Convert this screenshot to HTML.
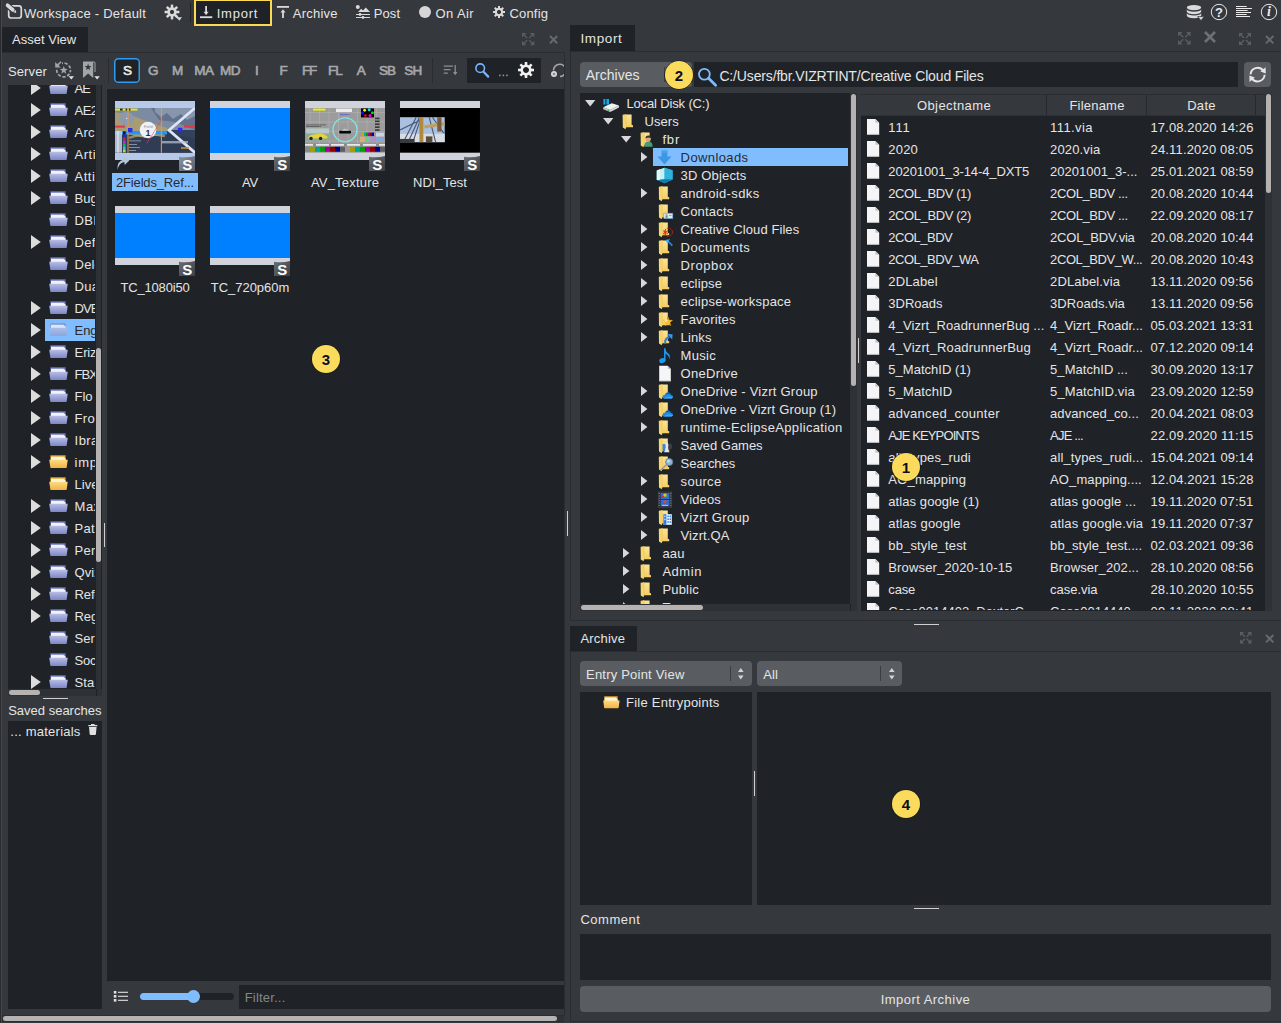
<!DOCTYPE html>
<html><head><meta charset="utf-8"><title>Workspace - Default</title><style>
html,body{margin:0;padding:0;}
body{width:1281px;height:1023px;overflow:hidden;background:#35383d;color:#e4e5e6;font-family:"Liberation Sans",sans-serif;font-size:13px;position:relative;}
.a{position:absolute;}
.t{position:absolute;white-space:nowrap;line-height:16px;height:16px;}
.c{overflow:hidden;}
.bub{position:absolute;width:28px;height:28px;border-radius:14px;background:#fbdb5c;color:#0a0e20;font-weight:bold;font-size:15px;line-height:30px;text-align:center;box-shadow:0 0 0 0.6px #14161c;}
svg{position:absolute;overflow:visible;}
</style></head>
<body>
<svg style="left:0px;top:0px;" width="30" height="26" viewBox="0 0 30 26"><rect x="8.7" y="5.9" width="12.6" height="12.1" rx="2.6" fill="none" stroke="#dadada" stroke-width="1.7"/><path d="M7.2 5.2 L14.2 11.2" stroke="#35383d" stroke-width="6" stroke-linecap="butt"/><path d="M7.6 5.3 L12.8 9.9" stroke="#dadada" stroke-width="3.7" stroke-linecap="round"/><path d="M13.4 12.3 L15.9 10 L16.2 12.9Z" fill="#dadada"/></svg>
<div class="t" style="top:5.7035px;letter-spacing:0.24px;left:24px;">Workspace - Default</div>
<svg style="left:0px;top:0px;" width="200" height="26" viewBox="0 0 200 26"><g transform="translate(172,12) rotate(0)"><rect x="-1.25" y="-7.4" width="2.5" height="5.2" fill="#dadada" transform="rotate(0)"/><rect x="-1.25" y="-7.4" width="2.5" height="5.2" fill="#dadada" transform="rotate(45)"/><rect x="-1.25" y="-7.4" width="2.5" height="5.2" fill="#dadada" transform="rotate(90)"/><rect x="-1.25" y="-7.4" width="2.5" height="5.2" fill="#dadada" transform="rotate(135)"/><rect x="-1.25" y="-7.4" width="2.5" height="5.2" fill="#dadada" transform="rotate(180)"/><rect x="-1.25" y="-7.4" width="2.5" height="5.2" fill="#dadada" transform="rotate(225)"/><rect x="-1.25" y="-7.4" width="2.5" height="5.2" fill="#dadada" transform="rotate(270)"/><rect x="-1.25" y="-7.4" width="2.5" height="5.2" fill="#dadada" transform="rotate(315)"/><circle r="3.45" fill="none" stroke="#dadada" stroke-width="2.5"/></g><path d="M176.6 17.2 L182 17.2 L179.3 20.8Z" fill="#dadada"/><path d="M174.5 14.5 L178 18" stroke="#dadada" stroke-width="2"/></svg>
<div class="a" style="left:190px;top:3px;width:1px;height:19px;background:#1f2226;"></div>
<div class="a" style="left:194px;top:-1px;width:74px;height:23px;background:#1f2226;border:2px solid #fbdb55;"></div>
<svg style="left:0px;top:0px;" width="230" height="26" viewBox="0 0 230 26"><path d="M200 17.2 H212.3" stroke="#dadada" stroke-width="1.8"/><path d="M206.1 6 V13" stroke="#dadada" stroke-width="1.8"/><path d="M203.6 11.8 H208.6 L206.1 15.2Z" fill="#dadada"/></svg>
<div class="t" style="top:5.7035px;letter-spacing:0.76px;left:216.7px;">Import</div>
<svg style="left:0px;top:0px;" width="300" height="26" viewBox="0 0 300 26"><path d="M276.9 6.9 H289" stroke="#dadada" stroke-width="1.8"/><path d="M283 11.5 V18" stroke="#dadada" stroke-width="1.8"/><path d="M280.5 12.6 H285.5 L283 9.3Z" fill="#dadada"/></svg>
<div class="t" style="top:5.7035px;letter-spacing:0.22px;left:292.8px;">Archive</div>
<svg style="left:0px;top:0px;" width="400" height="26" viewBox="0 0 400 26"><circle cx="357.8" cy="6.9" r="2" fill="#dadada"/><path d="M358 12 L361.2 8.8 L363 10.6 L365.8 7.6 L370 12Z" fill="#dadada"/><path d="M356 14.5 H370 M356 17.5 H370" stroke="#dadada" stroke-width="1"/><circle cx="360" cy="14.5" r="1.4" fill="#dadada"/><circle cx="363" cy="17.5" r="1.4" fill="#dadada"/></svg>
<div class="t" style="top:5.7035px;letter-spacing:0.11px;left:373.7px;">Post</div>
<div class="a" style="left:418.8px;top:6px;width:12.3px;height:12.3px;background:#d6d6d6;border-radius:7px;"></div>
<div class="t" style="top:5.7035px;letter-spacing:0.36px;left:435.6px;">On Air</div>
<svg style="left:0px;top:0px;" width="520" height="26" viewBox="0 0 520 26"><g transform="translate(499,12) rotate(0)"><rect x="-1" y="-6" width="2" height="3.8" fill="#dadada" transform="rotate(0)"/><rect x="-1" y="-6" width="2" height="3.8" fill="#dadada" transform="rotate(45)"/><rect x="-1" y="-6" width="2" height="3.8" fill="#dadada" transform="rotate(90)"/><rect x="-1" y="-6" width="2" height="3.8" fill="#dadada" transform="rotate(135)"/><rect x="-1" y="-6" width="2" height="3.8" fill="#dadada" transform="rotate(180)"/><rect x="-1" y="-6" width="2" height="3.8" fill="#dadada" transform="rotate(225)"/><rect x="-1" y="-6" width="2" height="3.8" fill="#dadada" transform="rotate(270)"/><rect x="-1" y="-6" width="2" height="3.8" fill="#dadada" transform="rotate(315)"/><circle r="3.2" fill="none" stroke="#dadada" stroke-width="2"/></g></svg>
<div class="t" style="top:5.7035px;letter-spacing:0.21px;left:509.4px;">Config</div>
<svg style="left:1180px;top:0px;" width="100" height="26" viewBox="0 0 100 26"><ellipse cx="14" cy="7.6" rx="7.2" ry="2.6" fill="#dadada"/><path d="M6.8 9.2 A7.2 2.6 0 0 0 21.2 9.2 V11.6 A7.2 2.6 0 0 1 6.8 11.6Z" fill="#dadada"/><path d="M6.8 13 A7.2 2.6 0 0 0 21.2 13 V15.6 A7.2 2.6 0 0 1 6.8 15.6Z" fill="#dadada"/><path d="M6.8 9.8 V8 M21.2 9.8 V8" stroke="#dadada" stroke-width="0"/><path d="M17.6 16.6 L24.4 16.6 L21 20.6Z" fill="#dadada" stroke="#35383d" stroke-width="0.8"/><circle cx="39" cy="12" r="7.7" fill="none" stroke="#e8e8e8" stroke-width="1"/><path d="M56 6.5 H66.7" stroke="#ececec" stroke-width="1"/><path d="M56 8.5 H71.9" stroke="#ececec" stroke-width="1"/><path d="M56 10.5 H67.6" stroke="#ececec" stroke-width="1"/><path d="M56 12.5 H71" stroke="#ececec" stroke-width="1"/><path d="M56 14.5 H66.7" stroke="#ececec" stroke-width="1"/><path d="M56 16.5 H70" stroke="#ececec" stroke-width="1"/><circle cx="89" cy="12" r="7.7" fill="none" stroke="#e8e8e8" stroke-width="1"/></svg>
<div class="t" style="top:4.7035px;letter-spacing:0px;font-weight:bold;left:1069px;width:300px;text-align:center;color:#ececec;">?</div>
<div class="t" style="left:1264px;top:3.5px;width:10px;text-align:center;font-family:'Liberation Serif',serif;font-style:italic;font-weight:bold;font-size:14px;color:#ececec;">i</div>
<svg style="left:1177.5px;top:31.5px;" width="12.6" height="12.6" viewBox="0 0 12.6 12.6"><path d="M0 0 L4.536 0 L0 4.536 Z" fill="#5b5e63"/><path d="M0.8 0.8 L5.292 5.292" stroke="#5b5e63" stroke-width="1.3"/><path d="M12.6 0 L8.064 0 L12.6 4.536 Z" fill="#5b5e63"/><path d="M11.8 0.8 L7.308 5.292" stroke="#5b5e63" stroke-width="1.3"/><path d="M0 12.6 L4.536 12.6 L0 8.064 Z" fill="#5b5e63"/><path d="M0.8 11.8 L5.292 7.308" stroke="#5b5e63" stroke-width="1.3"/><path d="M12.6 12.6 L8.064 12.6 L12.6 8.064 Z" fill="#5b5e63"/><path d="M11.8 11.8 L7.308 7.308" stroke="#5b5e63" stroke-width="1.3"/></svg>
<svg style="left:1205px;top:32.4px;" width="10" height="10" viewBox="0 0 10 10"><path d="M0 0 L10 10 M10 0 L0 10" stroke="#6d7074" stroke-width="2.6" fill="none"/></svg>
<svg style="left:1239px;top:33px;" width="12" height="12" viewBox="0 0 12 12"><path d="M0 0 L4.32 0 L0 4.32 Z" fill="#5b5e63"/><path d="M0.8 0.8 L5.04 5.04" stroke="#5b5e63" stroke-width="1.3"/><path d="M12 0 L7.68 0 L12 4.32 Z" fill="#5b5e63"/><path d="M11.2 0.8 L6.96 5.04" stroke="#5b5e63" stroke-width="1.3"/><path d="M0 12 L4.32 12 L0 7.68 Z" fill="#5b5e63"/><path d="M0.8 11.2 L5.04 6.96" stroke="#5b5e63" stroke-width="1.3"/><path d="M12 12 L7.68 12 L12 7.68 Z" fill="#5b5e63"/><path d="M11.2 11.2 L6.96 6.96" stroke="#5b5e63" stroke-width="1.3"/></svg>
<svg style="left:1266.3px;top:35.7px;" width="7.4" height="7.4" viewBox="0 0 7.4 7.4"><path d="M0 0 L7.4 7.4 M7.4 0 L0 7.4" stroke="#66696d" stroke-width="2" fill="none"/></svg>
<svg style="left:522px;top:33px;" width="12.3" height="12.3" viewBox="0 0 12.3 12.3"><path d="M0 0 L4.428 0 L0 4.428 Z" fill="#5b5e63"/><path d="M0.8 0.8 L5.166 5.166" stroke="#5b5e63" stroke-width="1.3"/><path d="M12.3 0 L7.872 0 L12.3 4.428 Z" fill="#5b5e63"/><path d="M11.5 0.8 L7.134 5.166" stroke="#5b5e63" stroke-width="1.3"/><path d="M0 12.3 L4.428 12.3 L0 7.872 Z" fill="#5b5e63"/><path d="M0.8 11.5 L5.166 7.134" stroke="#5b5e63" stroke-width="1.3"/><path d="M12.3 12.3 L7.872 12.3 L12.3 7.872 Z" fill="#5b5e63"/><path d="M11.5 11.5 L7.134 7.134" stroke="#5b5e63" stroke-width="1.3"/></svg>
<svg style="left:549.6px;top:35.8px;" width="7.2" height="7.2" viewBox="0 0 7.2 7.2"><path d="M0 0 L7.2 7.2 M7.2 0 L0 7.2" stroke="#66696d" stroke-width="2" fill="none"/></svg>
<svg style="left:1239.5px;top:632px;" width="11.5" height="11.5" viewBox="0 0 11.5 11.5"><path d="M0 0 L4.14 0 L0 4.14 Z" fill="#5b5e63"/><path d="M0.8 0.8 L4.83 4.83" stroke="#5b5e63" stroke-width="1.3"/><path d="M11.5 0 L7.36 0 L11.5 4.14 Z" fill="#5b5e63"/><path d="M10.7 0.8 L6.67 4.83" stroke="#5b5e63" stroke-width="1.3"/><path d="M0 11.5 L4.14 11.5 L0 7.36 Z" fill="#5b5e63"/><path d="M0.8 10.7 L4.83 6.67" stroke="#5b5e63" stroke-width="1.3"/><path d="M11.5 11.5 L7.36 11.5 L11.5 7.36 Z" fill="#5b5e63"/><path d="M10.7 10.7 L6.67 6.67" stroke="#5b5e63" stroke-width="1.3"/></svg>
<svg style="left:1266.3px;top:634.5px;" width="7.4" height="7.4" viewBox="0 0 7.4 7.4"><path d="M0 0 L7.4 7.4 M7.4 0 L0 7.4" stroke="#66696d" stroke-width="2" fill="none"/></svg>
<div class="a" style="left:0px;top:0px;width:1px;height:1023px;background:#292b2f;"></div>
<div class="a" style="left:1px;top:0px;width:1px;height:1023px;background:#45484d;"></div>
<div class="a" style="left:2px;top:27px;width:86px;height:25px;background:#1f2226;"></div>
<div class="t" style="top:31.7035px;letter-spacing:0.02px;left:12px;">Asset View</div>
<div class="a" style="left:2px;top:52px;width:563px;height:1px;background:#2a2d31;"></div>
<div class="a" style="left:564px;top:52px;width:1px;height:964px;background:#2a2d31;"></div>
<div class="a" style="left:2px;top:1015px;width:563px;height:1px;background:#2a2d31;"></div>
<div class="t" style="top:63.7035px;letter-spacing:0.11px;left:8px;">Server</div>
<svg style="left:50px;top:58px;" width="60" height="26" viewBox="0 0 60 26"><circle cx="13.6" cy="12" r="6.9" fill="none" stroke="#a3a6a9" stroke-width="1.7" stroke-dasharray="3.2 1.7" stroke-dashoffset="1"/><rect x="3" y="2" width="9" height="8" fill="#35383d"/><polygon points="13.8,8.1 14.858,10.8438 17.7944,11.0021 15.5119,12.8562 16.2687,15.6979 13.8,14.1 11.3313,15.6979 12.0881,12.8562 9.80556,11.0021 12.742,10.8438" fill="#a3a6a9"/><path d="M5.2 4 L5.2 9.6 L10.8 9.6Z" fill="#a3a6a9"/><path d="M7.2 7.6 L11 3.8" stroke="#a3a6a9" stroke-width="1.6"/><path d="M18.6 18.2 L24 18.2 L21.3 21.6Z" fill="#e2e2e2"/><path d="M33.2 4 H44 Q45 4 45 5 V14" fill="none" stroke="#a3a6a9" stroke-width="1"/><path d="M33 4 H43.2 V20 L38.1 15.6 L33 20Z" fill="#a3a6a9"/><polygon points="38.1,5.6 38.9817,7.98647 41.5238,8.08754 39.5266,9.66353 40.216,12.1125 38.1,10.7 35.984,12.1125 36.6734,9.66353 34.6762,8.08754 37.2183,7.98647" fill="#35383d"/><path d="M44.4 18.2 L49.8 18.2 L47.1 21.6Z" fill="#e2e2e2"/></svg>
<div class="a" style="left:108px;top:58px;width:1px;height:25px;background:#2a2c30;"></div>
<svg style="left:114px;top:58px;" width="26" height="25" viewBox="0 0 26 25"><rect x="0.75" y="0.75" width="24.5" height="23.5" rx="3.6" fill="#1f2226" stroke="#2f9bf2" stroke-width="1.5"/></svg>
<div class="t" style="top:63.0382px;letter-spacing:-1.20px;font-size:13.5px;left:-23px;width:300px;text-align:center;color:#e8e8e8;-webkit-text-stroke:0.65px #e8e8e8;">S</div>
<div class="t" style="top:63.0382px;letter-spacing:-0.69px;font-size:13.5px;left:3px;width:300px;text-align:center;color:#a5a7aa;-webkit-text-stroke:0.65px #a5a7aa;">G</div>
<div class="t" style="top:63.0382px;letter-spacing:0.94px;font-size:13.5px;left:28px;width:300px;text-align:center;color:#a5a7aa;-webkit-text-stroke:0.65px #a5a7aa;">M</div>
<div class="t" style="top:63.0382px;letter-spacing:-0.38px;font-size:13.5px;left:54px;width:300px;text-align:center;color:#a5a7aa;-webkit-text-stroke:0.65px #a5a7aa;">MA</div>
<div class="t" style="top:63.0382px;letter-spacing:-0.50px;font-size:13.5px;left:80px;width:300px;text-align:center;color:#a5a7aa;-webkit-text-stroke:0.65px #a5a7aa;">MD</div>
<div class="t" style="top:63.0382px;letter-spacing:-0.00px;font-size:13.5px;left:107px;width:300px;text-align:center;color:#a5a7aa;-webkit-text-stroke:0.65px #a5a7aa;">I</div>
<div class="t" style="top:63.0382px;letter-spacing:-1.20px;font-size:13.5px;left:133px;width:300px;text-align:center;color:#a5a7aa;-webkit-text-stroke:0.65px #a5a7aa;">F</div>
<div class="t" style="top:63.0382px;letter-spacing:-1.20px;font-size:13.5px;left:159px;width:300px;text-align:center;color:#a5a7aa;-webkit-text-stroke:0.65px #a5a7aa;">FF</div>
<div class="t" style="top:63.0382px;letter-spacing:-0.90px;font-size:13.5px;left:185px;width:300px;text-align:center;color:#a5a7aa;-webkit-text-stroke:0.65px #a5a7aa;">FL</div>
<div class="t" style="top:63.0382px;letter-spacing:-0.47px;font-size:13.5px;left:211px;width:300px;text-align:center;color:#a5a7aa;-webkit-text-stroke:0.65px #a5a7aa;">A</div>
<div class="t" style="top:63.0382px;letter-spacing:-0.93px;font-size:13.5px;left:237px;width:300px;text-align:center;color:#a5a7aa;-webkit-text-stroke:0.65px #a5a7aa;">SB</div>
<div class="t" style="top:63.0382px;letter-spacing:-0.70px;font-size:13.5px;left:263px;width:300px;text-align:center;color:#a5a7aa;-webkit-text-stroke:0.65px #a5a7aa;">SH</div>
<div class="a" style="left:431.5px;top:58px;width:1px;height:25px;background:#2a2c30;"></div>
<svg style="left:440px;top:60px;" width="20" height="20" viewBox="0 0 20 20"><path d="M3.8 6.2 H13 M3.8 9.7 H10.6 M3.8 13.2 H7.8" stroke="#8d9093" stroke-width="1.3"/><path d="M15.2 5 V14" stroke="#8d9093" stroke-width="1.3"/><path d="M13 12 H17.4 L15.2 15.2Z" fill="#8d9093"/></svg>
<div class="a" style="left:467px;top:58px;width:74px;height:24.5px;background:#1f2226;"></div>
<svg style="left:467px;top:58px;" width="74" height="25" viewBox="0 0 74 25"><circle cx="13.2" cy="10.2" r="4.3" fill="none" stroke="#74b4ff" stroke-width="1.6"/><path d="M16.5103 13.6759 L21.2 18.6" stroke="#74b4ff" stroke-width="2.3" stroke-linecap="round"/><rect x="32" y="16.6" width="1.6" height="1.6" fill="#8594a6"/><rect x="35.6" y="16.6" width="1.6" height="1.6" fill="#8594a6"/><rect x="39.2" y="16.6" width="1.6" height="1.6" fill="#8594a6"/><g transform="translate(59,12) rotate(0)"><rect x="-1.3" y="-8" width="2.6" height="5" fill="#f0f0f0" transform="rotate(0)"/><rect x="-1.3" y="-8" width="2.6" height="5" fill="#f0f0f0" transform="rotate(45)"/><rect x="-1.3" y="-8" width="2.6" height="5" fill="#f0f0f0" transform="rotate(90)"/><rect x="-1.3" y="-8" width="2.6" height="5" fill="#f0f0f0" transform="rotate(135)"/><rect x="-1.3" y="-8" width="2.6" height="5" fill="#f0f0f0" transform="rotate(180)"/><rect x="-1.3" y="-8" width="2.6" height="5" fill="#f0f0f0" transform="rotate(225)"/><rect x="-1.3" y="-8" width="2.6" height="5" fill="#f0f0f0" transform="rotate(270)"/><rect x="-1.3" y="-8" width="2.6" height="5" fill="#f0f0f0" transform="rotate(315)"/><circle r="4.3" fill="none" stroke="#f0f0f0" stroke-width="2.6"/></g></svg>
<div class="a c" style="left:548px;top:58px;width:16px;height:26px;">
<svg style="left:0px;top:0px;" width="30" height="26" viewBox="0 0 30 26"><path d="M5.5 12.5 A6.2 6.2 0 1 1 12 18.6" fill="none" stroke="#a3a6a9" stroke-width="1.5"/><circle cx="6" cy="16" r="3" fill="#d8d8d8"/><circle cx="6" cy="16" r="1.3" fill="#8a8d90"/></svg>
</div>
<div class="a" style="left:8px;top:85px;width:94px;height:611px;background:#1f2226;"></div>
<div class="a c" style="left:8px;top:85px;width:87.2px;height:604px;">
<svg width="0" height="0" style="left:0;top:0"><defs><linearGradient id="fb" x1="0" y1="0" x2="0" y2="1"><stop offset="0" stop-color="#b9bfe4"/><stop offset="1" stop-color="#7c86c6"/></linearGradient><linearGradient id="fy" x1="0" y1="0" x2="0" y2="1"><stop offset="0" stop-color="#fcdc84"/><stop offset="1" stop-color="#f2b444"/></linearGradient><linearGradient id="fs" x1="0" y1="0" x2="0" y2="1"><stop offset="0" stop-color="#a9bfea"/><stop offset="1" stop-color="#8ea5dc"/></linearGradient><linearGradient id="ff" x1="0" y1="0" x2="0" y2="1"><stop offset="0" stop-color="#fce596"/><stop offset="1" stop-color="#f4cd62"/></linearGradient><linearGradient id="sb" x1="0" y1="0" x2="1" y2="1"><stop offset="0" stop-color="#6a6e74"/><stop offset="1" stop-color="#3b3e43"/></linearGradient><linearGradient id="sbs" x1="0" y1="0" x2="1" y2="1"><stop offset="0" stop-color="#8e96a4"/><stop offset="1" stop-color="#565c68"/></linearGradient></defs></svg>
<svg style="left:23px;top:-4px;" width="10" height="14" viewBox="0 0 10 14"><path d="M0 0 L9.8 7 L0 14Z" fill="#dcdcdc"/></svg>
<svg style="left:40.8px;top:-4px" width="19" height="13" viewBox="0 0 19 13" preserveAspectRatio="none"><path d="M1.4 0.3 H16.6 V6 H1.4Z" fill="#6f7bc0"/><path d="M2 1.7 H14.3 L16.6 3.6 V6 H2Z" fill="#f2f3fa"/><path d="M0.3 4.7 H18.7 L17.7 12.6 Q17.6 13 17 13 H2 Q1.4 13 1.3 12.6Z" fill="url(#fb)"/></svg>
<div class="t" style="top:-4.2965px;letter-spacing:-0.94px;left:66.6px;color:#e4e5e6;">AE</div>
<svg style="left:23px;top:18px;" width="10" height="14" viewBox="0 0 10 14"><path d="M0 0 L9.8 7 L0 14Z" fill="#dcdcdc"/></svg>
<svg style="left:40.8px;top:18px" width="19" height="13" viewBox="0 0 19 13" preserveAspectRatio="none"><path d="M1.4 0.3 H16.6 V6 H1.4Z" fill="#6f7bc0"/><path d="M2 1.7 H14.3 L16.6 3.6 V6 H2Z" fill="#f2f3fa"/><path d="M0.3 4.7 H18.7 L17.7 12.6 Q17.6 13 17 13 H2 Q1.4 13 1.3 12.6Z" fill="url(#fb)"/></svg>
<div class="t" style="top:17.7035px;letter-spacing:-0.56px;left:66.6px;color:#e4e5e6;">AE2</div>
<svg style="left:23px;top:40px;" width="10" height="14" viewBox="0 0 10 14"><path d="M0 0 L9.8 7 L0 14Z" fill="#dcdcdc"/></svg>
<svg style="left:40.8px;top:40px" width="19" height="13" viewBox="0 0 19 13" preserveAspectRatio="none"><path d="M1.4 0.3 H16.6 V6 H1.4Z" fill="#6f7bc0"/><path d="M2 1.7 H14.3 L16.6 3.6 V6 H2Z" fill="#f2f3fa"/><path d="M0.3 4.7 H18.7 L17.7 12.6 Q17.6 13 17 13 H2 Q1.4 13 1.3 12.6Z" fill="url(#fb)"/></svg>
<div class="t" style="top:39.7035px;letter-spacing:0.24px;left:66.6px;color:#e4e5e6;">Arch</div>
<svg style="left:23px;top:62px;" width="10" height="14" viewBox="0 0 10 14"><path d="M0 0 L9.8 7 L0 14Z" fill="#dcdcdc"/></svg>
<svg style="left:40.8px;top:62px" width="19" height="13" viewBox="0 0 19 13" preserveAspectRatio="none"><path d="M1.4 0.3 H16.6 V6 H1.4Z" fill="#6f7bc0"/><path d="M2 1.7 H14.3 L16.6 3.6 V6 H2Z" fill="#f2f3fa"/><path d="M0.3 4.7 H18.7 L17.7 12.6 Q17.6 13 17 13 H2 Q1.4 13 1.3 12.6Z" fill="url(#fb)"/></svg>
<div class="t" style="top:61.7035px;letter-spacing:0.48px;left:66.6px;color:#e4e5e6;">Artis</div>
<svg style="left:23px;top:84px;" width="10" height="14" viewBox="0 0 10 14"><path d="M0 0 L9.8 7 L0 14Z" fill="#dcdcdc"/></svg>
<svg style="left:40.8px;top:84px" width="19" height="13" viewBox="0 0 19 13" preserveAspectRatio="none"><path d="M1.4 0.3 H16.6 V6 H1.4Z" fill="#6f7bc0"/><path d="M2 1.7 H14.3 L16.6 3.6 V6 H2Z" fill="#f2f3fa"/><path d="M0.3 4.7 H18.7 L17.7 12.6 Q17.6 13 17 13 H2 Q1.4 13 1.3 12.6Z" fill="url(#fb)"/></svg>
<div class="t" style="top:83.7035px;letter-spacing:0.47px;left:66.6px;color:#e4e5e6;">Attil</div>
<svg style="left:23px;top:106px;" width="10" height="14" viewBox="0 0 10 14"><path d="M0 0 L9.8 7 L0 14Z" fill="#dcdcdc"/></svg>
<svg style="left:40.8px;top:106px" width="19" height="13" viewBox="0 0 19 13" preserveAspectRatio="none"><path d="M1.4 0.3 H16.6 V6 H1.4Z" fill="#6f7bc0"/><path d="M2 1.7 H14.3 L16.6 3.6 V6 H2Z" fill="#f2f3fa"/><path d="M0.3 4.7 H18.7 L17.7 12.6 Q17.6 13 17 13 H2 Q1.4 13 1.3 12.6Z" fill="url(#fb)"/></svg>
<div class="t" style="top:105.704px;letter-spacing:0.02px;left:66.6px;color:#e4e5e6;">Bugs</div>
<svg style="left:40.8px;top:128px" width="19" height="13" viewBox="0 0 19 13" preserveAspectRatio="none"><path d="M1.4 0.3 H16.6 V6 H1.4Z" fill="#6f7bc0"/><path d="M2 1.7 H14.3 L16.6 3.6 V6 H2Z" fill="#f2f3fa"/><path d="M0.3 4.7 H18.7 L17.7 12.6 Q17.6 13 17 13 H2 Q1.4 13 1.3 12.6Z" fill="url(#fb)"/></svg>
<div class="t" style="top:127.704px;letter-spacing:0.28px;left:66.6px;color:#e4e5e6;">DBIm</div>
<svg style="left:23px;top:150px;" width="10" height="14" viewBox="0 0 10 14"><path d="M0 0 L9.8 7 L0 14Z" fill="#dcdcdc"/></svg>
<svg style="left:40.8px;top:150px" width="19" height="13" viewBox="0 0 19 13" preserveAspectRatio="none"><path d="M1.4 0.3 H16.6 V6 H1.4Z" fill="#6f7bc0"/><path d="M2 1.7 H14.3 L16.6 3.6 V6 H2Z" fill="#f2f3fa"/><path d="M0.3 4.7 H18.7 L17.7 12.6 Q17.6 13 17 13 H2 Q1.4 13 1.3 12.6Z" fill="url(#fb)"/></svg>
<div class="t" style="top:149.703px;letter-spacing:0.23px;left:66.6px;color:#e4e5e6;">Defa</div>
<svg style="left:40.8px;top:172px" width="19" height="13" viewBox="0 0 19 13" preserveAspectRatio="none"><path d="M1.4 0.3 H16.6 V6 H1.4Z" fill="#6f7bc0"/><path d="M2 1.7 H14.3 L16.6 3.6 V6 H2Z" fill="#f2f3fa"/><path d="M0.3 4.7 H18.7 L17.7 12.6 Q17.6 13 17 13 H2 Q1.4 13 1.3 12.6Z" fill="url(#fb)"/></svg>
<div class="t" style="top:171.703px;letter-spacing:0.15px;left:66.6px;color:#e4e5e6;">Dele</div>
<svg style="left:40.8px;top:194px" width="19" height="13" viewBox="0 0 19 13" preserveAspectRatio="none"><path d="M1.4 0.3 H16.6 V6 H1.4Z" fill="#6f7bc0"/><path d="M2 1.7 H14.3 L16.6 3.6 V6 H2Z" fill="#f2f3fa"/><path d="M0.3 4.7 H18.7 L17.7 12.6 Q17.6 13 17 13 H2 Q1.4 13 1.3 12.6Z" fill="url(#fb)"/></svg>
<div class="t" style="top:193.703px;letter-spacing:0.31px;left:66.6px;color:#e4e5e6;">Dual</div>
<svg style="left:23px;top:216px;" width="10" height="14" viewBox="0 0 10 14"><path d="M0 0 L9.8 7 L0 14Z" fill="#dcdcdc"/></svg>
<svg style="left:40.8px;top:216px" width="19" height="13" viewBox="0 0 19 13" preserveAspectRatio="none"><path d="M1.4 0.3 H16.6 V6 H1.4Z" fill="#6f7bc0"/><path d="M2 1.7 H14.3 L16.6 3.6 V6 H2Z" fill="#f2f3fa"/><path d="M0.3 4.7 H18.7 L17.7 12.6 Q17.6 13 17 13 H2 Q1.4 13 1.3 12.6Z" fill="url(#fb)"/></svg>
<div class="t" style="top:215.703px;letter-spacing:-0.92px;left:66.6px;color:#e4e5e6;">DVE_</div>
<div class="a" style="left:37px;top:234px;width:60px;height:22px;background:#80bdff;"></div>
<svg style="left:23px;top:238px;" width="10" height="14" viewBox="0 0 10 14"><path d="M0 0 L9.8 7 L0 14Z" fill="#dcdcdc"/></svg>
<svg style="left:40.8px;top:238px" width="19" height="13" viewBox="0 0 19 13" preserveAspectRatio="none"><path d="M1.4 0.3 H16.6 V6 H1.4Z" fill="#7f93d6"/><path d="M2 1.7 H14.3 L16.6 3.6 V6 H2Z" fill="#dbe6fb"/><path d="M0.3 4.7 H18.7 L17.7 12.6 Q17.6 13 17 13 H2 Q1.4 13 1.3 12.6Z" fill="url(#fs)"/></svg>
<div class="t" style="top:237.703px;letter-spacing:-0.10px;left:66.6px;color:#2a2a2a;">Engi</div>
<svg style="left:23px;top:260px;" width="10" height="14" viewBox="0 0 10 14"><path d="M0 0 L9.8 7 L0 14Z" fill="#dcdcdc"/></svg>
<svg style="left:40.8px;top:260px" width="19" height="13" viewBox="0 0 19 13" preserveAspectRatio="none"><path d="M1.4 0.3 H16.6 V6 H1.4Z" fill="#6f7bc0"/><path d="M2 1.7 H14.3 L16.6 3.6 V6 H2Z" fill="#f2f3fa"/><path d="M0.3 4.7 H18.7 L17.7 12.6 Q17.6 13 17 13 H2 Q1.4 13 1.3 12.6Z" fill="url(#fb)"/></svg>
<div class="t" style="top:259.704px;letter-spacing:-0.12px;left:66.6px;color:#e4e5e6;">Erizo</div>
<svg style="left:23px;top:282px;" width="10" height="14" viewBox="0 0 10 14"><path d="M0 0 L9.8 7 L0 14Z" fill="#dcdcdc"/></svg>
<svg style="left:40.8px;top:282px" width="19" height="13" viewBox="0 0 19 13" preserveAspectRatio="none"><path d="M1.4 0.3 H16.6 V6 H1.4Z" fill="#6f7bc0"/><path d="M2 1.7 H14.3 L16.6 3.6 V6 H2Z" fill="#f2f3fa"/><path d="M0.3 4.7 H18.7 L17.7 12.6 Q17.6 13 17 13 H2 Q1.4 13 1.3 12.6Z" fill="url(#fb)"/></svg>
<div class="t" style="top:281.704px;letter-spacing:-1.01px;left:66.6px;color:#e4e5e6;">FBX_</div>
<svg style="left:23px;top:304px;" width="10" height="14" viewBox="0 0 10 14"><path d="M0 0 L9.8 7 L0 14Z" fill="#dcdcdc"/></svg>
<svg style="left:40.8px;top:304px" width="19" height="13" viewBox="0 0 19 13" preserveAspectRatio="none"><path d="M1.4 0.3 H16.6 V6 H1.4Z" fill="#6f7bc0"/><path d="M2 1.7 H14.3 L16.6 3.6 V6 H2Z" fill="#f2f3fa"/><path d="M0.3 4.7 H18.7 L17.7 12.6 Q17.6 13 17 13 H2 Q1.4 13 1.3 12.6Z" fill="url(#fb)"/></svg>
<div class="t" style="top:303.704px;letter-spacing:-0.07px;left:66.6px;color:#e4e5e6;">Flo</div>
<svg style="left:23px;top:326px;" width="10" height="14" viewBox="0 0 10 14"><path d="M0 0 L9.8 7 L0 14Z" fill="#dcdcdc"/></svg>
<svg style="left:40.8px;top:326px" width="19" height="13" viewBox="0 0 19 13" preserveAspectRatio="none"><path d="M1.4 0.3 H16.6 V6 H1.4Z" fill="#6f7bc0"/><path d="M2 1.7 H14.3 L16.6 3.6 V6 H2Z" fill="#f2f3fa"/><path d="M0.3 4.7 H18.7 L17.7 12.6 Q17.6 13 17 13 H2 Q1.4 13 1.3 12.6Z" fill="url(#fb)"/></svg>
<div class="t" style="top:325.704px;letter-spacing:0.28px;left:66.6px;color:#e4e5e6;">Fron</div>
<svg style="left:23px;top:348px;" width="10" height="14" viewBox="0 0 10 14"><path d="M0 0 L9.8 7 L0 14Z" fill="#dcdcdc"/></svg>
<svg style="left:40.8px;top:348px" width="19" height="13" viewBox="0 0 19 13" preserveAspectRatio="none"><path d="M1.4 0.3 H16.6 V6 H1.4Z" fill="#6f7bc0"/><path d="M2 1.7 H14.3 L16.6 3.6 V6 H2Z" fill="#f2f3fa"/><path d="M0.3 4.7 H18.7 L17.7 12.6 Q17.6 13 17 13 H2 Q1.4 13 1.3 12.6Z" fill="url(#fb)"/></svg>
<div class="t" style="top:347.704px;letter-spacing:0.43px;left:66.6px;color:#e4e5e6;">Ibrah</div>
<svg style="left:23px;top:370px;" width="10" height="14" viewBox="0 0 10 14"><path d="M0 0 L9.8 7 L0 14Z" fill="#dcdcdc"/></svg>
<svg style="left:40.8px;top:370px" width="19" height="13" viewBox="0 0 19 13" preserveAspectRatio="none"><path d="M1.4 0.3 H16.6 V6 H1.4Z" fill="#e8a830"/><path d="M2 1.7 H14.3 L16.6 3.6 V6 H2Z" fill="#fff6d8"/><path d="M0.3 4.7 H18.7 L17.7 12.6 Q17.6 13 17 13 H2 Q1.4 13 1.3 12.6Z" fill="url(#fy)"/></svg>
<div class="t" style="top:369.704px;letter-spacing:0.75px;left:66.6px;color:#e4e5e6;">impo</div>
<svg style="left:40.8px;top:392px" width="19" height="13" viewBox="0 0 19 13" preserveAspectRatio="none"><path d="M1.4 0.3 H16.6 V6 H1.4Z" fill="#e8a830"/><path d="M2 1.7 H14.3 L16.6 3.6 V6 H2Z" fill="#fff6d8"/><path d="M0.3 4.7 H18.7 L17.7 12.6 Q17.6 13 17 13 H2 Q1.4 13 1.3 12.6Z" fill="url(#fy)"/></svg>
<div class="t" style="top:391.704px;letter-spacing:0.02px;left:66.6px;color:#e4e5e6;">Live</div>
<svg style="left:23px;top:414px;" width="10" height="14" viewBox="0 0 10 14"><path d="M0 0 L9.8 7 L0 14Z" fill="#dcdcdc"/></svg>
<svg style="left:40.8px;top:414px" width="19" height="13" viewBox="0 0 19 13" preserveAspectRatio="none"><path d="M1.4 0.3 H16.6 V6 H1.4Z" fill="#6f7bc0"/><path d="M2 1.7 H14.3 L16.6 3.6 V6 H2Z" fill="#f2f3fa"/><path d="M0.3 4.7 H18.7 L17.7 12.6 Q17.6 13 17 13 H2 Q1.4 13 1.3 12.6Z" fill="url(#fb)"/></svg>
<div class="t" style="top:413.704px;letter-spacing:0.46px;left:66.6px;color:#e4e5e6;">Maxo</div>
<svg style="left:23px;top:436px;" width="10" height="14" viewBox="0 0 10 14"><path d="M0 0 L9.8 7 L0 14Z" fill="#dcdcdc"/></svg>
<svg style="left:40.8px;top:436px" width="19" height="13" viewBox="0 0 19 13" preserveAspectRatio="none"><path d="M1.4 0.3 H16.6 V6 H1.4Z" fill="#6f7bc0"/><path d="M2 1.7 H14.3 L16.6 3.6 V6 H2Z" fill="#f2f3fa"/><path d="M0.3 4.7 H18.7 L17.7 12.6 Q17.6 13 17 13 H2 Q1.4 13 1.3 12.6Z" fill="url(#fb)"/></svg>
<div class="t" style="top:435.704px;letter-spacing:0.28px;left:66.6px;color:#e4e5e6;">Patr</div>
<svg style="left:23px;top:458px;" width="10" height="14" viewBox="0 0 10 14"><path d="M0 0 L9.8 7 L0 14Z" fill="#dcdcdc"/></svg>
<svg style="left:40.8px;top:458px" width="19" height="13" viewBox="0 0 19 13" preserveAspectRatio="none"><path d="M1.4 0.3 H16.6 V6 H1.4Z" fill="#6f7bc0"/><path d="M2 1.7 H14.3 L16.6 3.6 V6 H2Z" fill="#f2f3fa"/><path d="M0.3 4.7 H18.7 L17.7 12.6 Q17.6 13 17 13 H2 Q1.4 13 1.3 12.6Z" fill="url(#fb)"/></svg>
<div class="t" style="top:457.704px;letter-spacing:0.25px;left:66.6px;color:#e4e5e6;">Perf</div>
<svg style="left:23px;top:480px;" width="10" height="14" viewBox="0 0 10 14"><path d="M0 0 L9.8 7 L0 14Z" fill="#dcdcdc"/></svg>
<svg style="left:40.8px;top:480px" width="19" height="13" viewBox="0 0 19 13" preserveAspectRatio="none"><path d="M1.4 0.3 H16.6 V6 H1.4Z" fill="#6f7bc0"/><path d="M2 1.7 H14.3 L16.6 3.6 V6 H2Z" fill="#f2f3fa"/><path d="M0.3 4.7 H18.7 L17.7 12.6 Q17.6 13 17 13 H2 Q1.4 13 1.3 12.6Z" fill="url(#fb)"/></svg>
<div class="t" style="top:479.704px;letter-spacing:0.02px;left:66.6px;color:#e4e5e6;">Qviz</div>
<svg style="left:23px;top:502px;" width="10" height="14" viewBox="0 0 10 14"><path d="M0 0 L9.8 7 L0 14Z" fill="#dcdcdc"/></svg>
<svg style="left:40.8px;top:502px" width="19" height="13" viewBox="0 0 19 13" preserveAspectRatio="none"><path d="M1.4 0.3 H16.6 V6 H1.4Z" fill="#6f7bc0"/><path d="M2 1.7 H14.3 L16.6 3.6 V6 H2Z" fill="#f2f3fa"/><path d="M0.3 4.7 H18.7 L17.7 12.6 Q17.6 13 17 13 H2 Q1.4 13 1.3 12.6Z" fill="url(#fb)"/></svg>
<div class="t" style="top:501.704px;letter-spacing:-0.11px;left:66.6px;color:#e4e5e6;">Refer</div>
<svg style="left:23px;top:524px;" width="10" height="14" viewBox="0 0 10 14"><path d="M0 0 L9.8 7 L0 14Z" fill="#dcdcdc"/></svg>
<svg style="left:40.8px;top:524px" width="19" height="13" viewBox="0 0 19 13" preserveAspectRatio="none"><path d="M1.4 0.3 H16.6 V6 H1.4Z" fill="#6f7bc0"/><path d="M2 1.7 H14.3 L16.6 3.6 V6 H2Z" fill="#f2f3fa"/><path d="M0.3 4.7 H18.7 L17.7 12.6 Q17.6 13 17 13 H2 Q1.4 13 1.3 12.6Z" fill="url(#fb)"/></svg>
<div class="t" style="top:523.703px;letter-spacing:-0.11px;left:66.6px;color:#e4e5e6;">Regr</div>
<svg style="left:40.8px;top:546px" width="19" height="13" viewBox="0 0 19 13" preserveAspectRatio="none"><path d="M1.4 0.3 H16.6 V6 H1.4Z" fill="#6f7bc0"/><path d="M2 1.7 H14.3 L16.6 3.6 V6 H2Z" fill="#f2f3fa"/><path d="M0.3 4.7 H18.7 L17.7 12.6 Q17.6 13 17 13 H2 Q1.4 13 1.3 12.6Z" fill="url(#fb)"/></svg>
<div class="t" style="top:545.703px;letter-spacing:-0.03px;left:66.6px;color:#e4e5e6;">Serie</div>
<svg style="left:40.8px;top:568px" width="19" height="13" viewBox="0 0 19 13" preserveAspectRatio="none"><path d="M1.4 0.3 H16.6 V6 H1.4Z" fill="#6f7bc0"/><path d="M2 1.7 H14.3 L16.6 3.6 V6 H2Z" fill="#f2f3fa"/><path d="M0.3 4.7 H18.7 L17.7 12.6 Q17.6 13 17 13 H2 Q1.4 13 1.3 12.6Z" fill="url(#fb)"/></svg>
<div class="t" style="top:567.703px;letter-spacing:-0.21px;left:66.6px;color:#e4e5e6;">Soci</div>
<svg style="left:23px;top:590px;" width="10" height="14" viewBox="0 0 10 14"><path d="M0 0 L9.8 7 L0 14Z" fill="#dcdcdc"/></svg>
<svg style="left:40.8px;top:590px" width="19" height="13" viewBox="0 0 19 13" preserveAspectRatio="none"><path d="M1.4 0.3 H16.6 V6 H1.4Z" fill="#6f7bc0"/><path d="M2 1.7 H14.3 L16.6 3.6 V6 H2Z" fill="#f2f3fa"/><path d="M0.3 4.7 H18.7 L17.7 12.6 Q17.6 13 17 13 H2 Q1.4 13 1.3 12.6Z" fill="url(#fb)"/></svg>
<div class="t" style="top:589.703px;letter-spacing:0.10px;left:66.6px;color:#e4e5e6;">Start</div>
</div>
<div class="a" style="left:96px;top:85px;width:5.2px;height:604px;background:#2e3136;"></div>
<div class="a" style="left:96px;top:348px;width:5px;height:214px;background:#b6b2b2;border-radius:2.5px;"></div>
<div class="a" style="left:8px;top:689px;width:94px;height:7px;background:#2e3136;"></div>
<div class="a" style="left:9px;top:690px;width:31.3px;height:5px;background:#b6b2b2;border-radius:2.5px;"></div>
<div class="a" style="left:95.5px;top:689px;width:1px;height:7px;background:#1f2226;"></div>
<div class="a" style="left:43px;top:698px;width:25px;height:1px;background:#cfcfcf;"></div>
<div class="a" style="left:104px;top:523px;width:1px;height:24px;background:#cfcfcf;"></div>
<div class="t" style="top:702.703px;letter-spacing:0.00px;left:8.2px;">Saved searches</div>
<div class="a" style="left:8px;top:721px;width:94px;height:288px;background:#1f2226;"></div>
<div class="t" style="top:723.703px;letter-spacing:0.24px;left:10.3px;">... materials</div>
<svg style="left:88px;top:724px;" width="10" height="11" viewBox="0 0 10 11"><path d="M0.3 1.6 H9.3 M3 0.6 H6.6" stroke="#e0e0e0" stroke-width="1.2"/><path d="M1 3 H8.6 L7.9 10.2 Q7.8 11 7 11 H2.6 Q1.8 11 1.7 10.2Z" fill="#e0e0e0"/></svg>
<div class="a" style="left:107px;top:89px;width:457px;height:892px;background:#1f2226;"></div>
<div class="a" style="left:115px;top:101px;width:80px;height:59px;background:#b7c9e8;"></div>
<svg style="left:115px;top:108.3px;overflow:hidden;" width="80" height="44.7" viewBox="0 0 80 44.7"><rect width="80" height="44.7" fill="#33415a"/><rect width="80" height="22" fill="#7c8aa2"/><path d="M0 4 L18 8 L34 14 L52 20 L52 26 L30 30 L0 24Z" fill="#a89c74"/><path d="M36 0 H80 V22 L60 14 L44 12Z" fill="#62718c"/><path d="M40 4 L46 9 L52 5 L58 11 L66 6 L72 12 L80 8 V0 H40Z" fill="#8795ad"/><path d="M0 24 L30 30 L52 26 L80 30 V44.7 H0Z" fill="#2f3c54"/><path d="M14 30 Q30 24 50 28" stroke="#b79860" stroke-width="2.4" fill="none" opacity="0.8"/><rect x="0" y="0.6" width="22.5" height="2" fill="#e6e629"/><rect x="5" y="0.6" width="2.6" height="2" fill="#26282c"/><rect x="10.6" y="0.6" width="1.6" height="2" fill="#26282c"/><rect x="14" y="0.6" width="1.4" height="2" fill="#26282c"/><circle cx="11.6" cy="10.8" r="7" fill="#8b98ae"/><circle cx="11.6" cy="10.4" r="0.7" fill="#dfe6f0"/><rect x="0" y="17.6" width="10" height="2" fill="#dc3a44"/><rect x="69" y="17.6" width="11" height="2" fill="#dc3a44"/><rect x="0" y="23" width="52" height="3.4" fill="#2196ff"/><rect x="0" y="23" width="7" height="21.7" fill="#c6d2e4" opacity="0.85"/><rect x="2.5" y="23" width="1" height="21.7" fill="#e8eef8"/><rect x="8" y="23.4" width="2.6" height="3" fill="#111"/><rect x="8" y="26.4" width="2.6" height="3" fill="#1a2ad8"/><rect x="8" y="29.4" width="2.6" height="3" fill="#c2283a"/><rect x="8" y="32.4" width="2.6" height="3" fill="#c02ad8"/><rect x="8" y="35.4" width="2.6" height="3" fill="#19b83a"/><rect x="8" y="38.4" width="2.6" height="3" fill="#27c8d8"/><rect x="8" y="41.4" width="2.6" height="3" fill="#d4d42a"/><path d="M13 0 V44.7 M46.4 0 V44.7" stroke="#e09a42" stroke-width="1.1"/><rect x="13" y="20" width="4.4" height="4.2" fill="#2a2af2"/><rect x="63" y="19.8" width="4.4" height="4.4" fill="#2a2af2"/><circle cx="33" cy="22" r="8.3" fill="#eef2f8"/><path d="M32 35 L48 9.6" stroke="#e2455a" stroke-width="0.9" stroke-dasharray="1.6 0.8"/><path d="M80 0 L54 22.2 L80 44.7" fill="none" stroke="#dbe6f6" stroke-width="2.8"/><rect x="14" y="32.5" width="12" height="0.8" fill="#9aa6b8"/><rect x="14" y="36" width="8" height="0.8" fill="#9aa6b8"/><rect x="14" y="39" width="11" height="0.8" fill="#9aa6b8"/><rect x="14" y="42" width="7" height="0.8" fill="#9aa6b8"/><rect x="47" y="33" width="26" height="2.4" fill="#b9c3d4" opacity="0.7"/><rect x="66" y="39" width="8" height="2" fill="#c89040" opacity="0.8"/></svg>
<div class="t" style="left:142px;top:128.9px;width:12px;text-align:center;font-weight:bold;font-size:9px;line-height:9px;height:9px;color:#2a2d33;">1</div>
<div class="t" style="left:142.3px;top:124.5px;width:12px;text-align:center;font-size:4px;line-height:4px;height:4px;color:#8a8f98;">Field</div>
<svg style="left:179px;top:156px;" width="16" height="15" viewBox="0 0 16 15"><path d="M0 0.8 Q8 2.2 16 0 V15 H0Z" fill="url(#sbs)"/></svg>
<div class="t" style="left:179.2px;top:156.6px;width:16px;text-align:center;font-weight:bold;font-size:15px;line-height:15px;height:15px;color:#fff;">S</div>
<div class="a" style="left:112px;top:173px;width:86px;height:18px;background:#80bdff;"></div>
<svg style="left:116px;top:155px;" width="14" height="16" viewBox="0 0 14 16"><path d="M1.6 15 Q0.6 6 8 4.6 L8 1 L13.4 5.6 L8.6 10 L8.4 7 Q3 7.4 1.6 15Z" fill="#b4c4dc"/></svg>
<div class="t" style="top:174.703px;letter-spacing:-0.15px;left:5px;width:300px;text-align:center;color:#2a2a2a;">2Fields_Ref...</div>
<div class="a" style="left:210px;top:101px;width:80px;height:59px;background:#d0d3db;"></div>
<div class="a" style="left:210px;top:108.3px;width:80px;height:44.7px;background:#0080ff;"></div>
<svg style="left:274px;top:156px;" width="16" height="15" viewBox="0 0 16 15"><path d="M0 0.8 Q8 2.2 16 0 V15 H0Z" fill="url(#sb)"/></svg>
<div class="t" style="left:274.2px;top:156.6px;width:16px;text-align:center;font-weight:bold;font-size:15px;line-height:15px;height:15px;color:#fff;">S</div>
<div class="t" style="top:174.703px;letter-spacing:-0.21px;left:100px;width:300px;text-align:center;color:#e4e5e6;">AV</div>
<div class="a" style="left:305px;top:101px;width:80px;height:59px;background:#d0d3db;"></div>
<svg style="left:305px;top:108.3px;overflow:hidden;" width="80" height="44.7" viewBox="0 0 80 44.7"><rect width="80" height="44.7" fill="#9c9c9c"/><path d="M5 0 V37" stroke="#b4b4b4" stroke-width="0.6"/><path d="M14.5 0 V37" stroke="#b4b4b4" stroke-width="0.6"/><path d="M24 0 V37" stroke="#b4b4b4" stroke-width="0.6"/><path d="M33.5 0 V37" stroke="#b4b4b4" stroke-width="0.6"/><path d="M43 0 V37" stroke="#b4b4b4" stroke-width="0.6"/><path d="M52.5 0 V37" stroke="#b4b4b4" stroke-width="0.6"/><path d="M62 0 V37" stroke="#b4b4b4" stroke-width="0.6"/><path d="M71.5 0 V37" stroke="#b4b4b4" stroke-width="0.6"/><path d="M0 4.5 H80" stroke="#b4b4b4" stroke-width="0.6"/><path d="M0 14 H80" stroke="#b4b4b4" stroke-width="0.6"/><path d="M0 23.5 H80" stroke="#b4b4b4" stroke-width="0.6"/><path d="M0 33 H80" stroke="#b4b4b4" stroke-width="0.6"/><rect x="8" y="0.6" width="12.5" height="2" fill="#f2f200"/><rect x="31" y="0.6" width="16" height="3.4" fill="#ececec"/><rect x="35" y="6.4" width="9.6" height="0.7" fill="#5050e0"/><rect x="56" y="0.4" width="13" height="9" fill="#000"/><circle cx="59.6" cy="2.2" r="1.5" fill="#f4f400"/><circle cx="64.2" cy="1.8" r="1.5" fill="#00e8f0"/><circle cx="57.4" cy="5" r="1.5" fill="#1010ff"/><circle cx="67.4" cy="4.8" r="1.5" fill="#00e000"/><circle cx="60.4" cy="7.6" r="1.5" fill="#f00000"/><circle cx="65" cy="7.4" r="1.5" fill="#f000f0"/><circle cx="40" cy="21.8" r="12" fill="none" stroke="#7fe6e6" stroke-width="1.3"/><rect x="34.2" y="22.8" width="11.8" height="2.6" rx="1" fill="#050505"/><path d="M36.5 22.8 Q40 18.6 44 22.8Z" fill="#b8c2c8"/><rect x="1" y="16.6" width="20" height="0.7" fill="#4a4a4a"/><rect x="1" y="18.2" width="15" height="0.7" fill="#4a4a4a"/><rect x="1" y="20.4" width="23" height="12.4" fill="#8ea79c"/><rect x="1" y="20.4" width="23" height="5" fill="#b8c8c6"/><path d="M3 29.5 Q5 26.4 9 26.4 L15 25.4 Q19 25.2 22.4 28.4 L22.4 30.4 H3Z" fill="#e4d43a"/><circle cx="6" cy="30.4" r="1.7" fill="#222"/><circle cx="15.6" cy="30.4" r="1.7" fill="#222"/><rect x="70" y="9.6" width="4.6" height="1.7" fill="#3a3a3a"/><rect x="70" y="12.5" width="4.6" height="1.7" fill="#3a3a3a"/><rect x="70" y="15.4" width="4.6" height="1.7" fill="#3a3a3a"/><rect x="70" y="18.3" width="4.6" height="1.7" fill="#3a3a3a"/><rect x="70" y="21.2" width="4.6" height="1.7" fill="#3a3a3a"/><rect x="57" y="24.6" width="2" height="3.6" fill="#b8b800"/><rect x="59" y="24.6" width="2" height="3.6" fill="#00a8a8"/><rect x="61" y="24.6" width="2" height="3.6" fill="#00a000"/><rect x="63" y="24.6" width="2" height="3.6" fill="#a800a8"/><rect x="65" y="24.6" width="2" height="3.6" fill="#a80000"/><rect x="67" y="24.6" width="2" height="3.6" fill="#0000a8"/><rect x="55" y="28.6" width="15" height="5.4" fill="#b090c8"/><rect x="55" y="28.6" width="5" height="5.4" fill="#d8b070"/><rect x="60" y="28.6" width="5" height="5.4" fill="#70c890"/><rect x="71" y="24.6" width="8" height="4" fill="#c8d4e8"/><rect x="71" y="29.2" width="8" height="4.6" fill="#88a8d0"/><rect x="0" y="35.6" width="80" height="2.6" fill="#8c8c8c"/><rect x="0" y="36" width="8" height="1.8" fill="#e8e8e8"/><rect x="11" y="36" width="13" height="1.8" fill="#e8e8e8"/><rect x="26" y="36" width="13" height="1.8" fill="#e8e8e8"/><rect x="42" y="36" width="13" height="1.8" fill="#e8e8e8"/><rect x="58" y="36" width="13" height="1.8" fill="#e8e8e8"/><rect x="74" y="36" width="6" height="1.8" fill="#e8e8e8"/><rect x="0" y="38.8" width="5" height="5" fill="#8a8a8a"/><rect x="5" y="38.8" width="5" height="5" fill="#a0a000"/><rect x="10" y="38.8" width="5" height="5" fill="#00a0a0"/><rect x="15" y="38.8" width="5" height="5" fill="#00a000"/><rect x="20" y="38.8" width="5" height="5" fill="#a000a0"/><rect x="25" y="38.8" width="5" height="5" fill="#900000"/><rect x="30" y="38.8" width="5" height="5" fill="#000090"/><rect x="35" y="38.8" width="5" height="5" fill="#606060"/><rect x="40" y="38.8" width="5" height="5" fill="#9a9a9a"/><rect x="45" y="38.8" width="5" height="5" fill="#a0a000"/><rect x="50" y="38.8" width="5" height="5" fill="#00a0a0"/><rect x="55" y="38.8" width="5" height="5" fill="#00a000"/><rect x="60" y="38.8" width="5" height="5" fill="#a000a0"/><rect x="65" y="38.8" width="5" height="5" fill="#900000"/><rect x="70" y="38.8" width="5" height="5" fill="#000090"/><rect x="75" y="38.8" width="5" height="5" fill="#606060"/></svg>
<svg style="left:369px;top:156px;" width="16" height="15" viewBox="0 0 16 15"><path d="M0 0.8 Q8 2.2 16 0 V15 H0Z" fill="url(#sb)"/></svg>
<div class="t" style="left:369.2px;top:156.6px;width:16px;text-align:center;font-weight:bold;font-size:15px;line-height:15px;height:15px;color:#fff;">S</div>
<div class="t" style="top:174.703px;letter-spacing:0.20px;left:195px;width:300px;text-align:center;color:#e4e5e6;">AV_Texture</div>
<div class="a" style="left:400px;top:101px;width:80px;height:59px;background:#d0d3db;"></div>
<svg style="left:400px;top:108.3px;overflow:hidden;" width="80" height="44.7" viewBox="0 0 80 44.7"><rect width="80" height="44.7" fill="#000"/><g transform="translate(0,9.2) scale(1.62,1.6)"><rect x="0" y="0" width="27.6" height="15.6" fill="#a9c0e0"/><rect x="0" y="10.4" width="27.6" height="5.2" fill="#d8dde4"/><path d="M2 15.6 L10 0 M5 15.6 L12 0 M8 15.6 L13 0 M0 8 L12 2 M18 0 L22 15.6 M20 0 L27 10" stroke="#4a5a78" stroke-width="0.7"/><rect x="12" y="0" width="2.4" height="15.6" fill="#b08a3a"/><path d="M15 5 L27.6 3 V5 L15 7Z" fill="#c0a060"/><rect x="23" y="0" width="2.6" height="9" fill="#7a5a3a"/><rect x="0" y="13.6" width="9" height="2" fill="#3a3a3a"/><rect x="16" y="12" width="4" height="3.6" fill="#5a4a3a"/></g></svg>
<svg style="left:464px;top:156px;" width="16" height="15" viewBox="0 0 16 15"><path d="M0 0.8 Q8 2.2 16 0 V15 H0Z" fill="url(#sb)"/></svg>
<div class="t" style="left:464.2px;top:156.6px;width:16px;text-align:center;font-weight:bold;font-size:15px;line-height:15px;height:15px;color:#fff;">S</div>
<div class="t" style="top:174.703px;letter-spacing:0.07px;left:290px;width:300px;text-align:center;color:#e4e5e6;">NDI_Test</div>
<div class="a" style="left:115px;top:206px;width:80px;height:59px;background:#d0d3db;"></div>
<div class="a" style="left:115px;top:213.3px;width:80px;height:44.7px;background:#0080ff;"></div>
<svg style="left:179px;top:261px;" width="16" height="15" viewBox="0 0 16 15"><path d="M0 0.8 Q8 2.2 16 0 V15 H0Z" fill="url(#sb)"/></svg>
<div class="t" style="left:179.2px;top:261.6px;width:16px;text-align:center;font-weight:bold;font-size:15px;line-height:15px;height:15px;color:#fff;">S</div>
<div class="t" style="top:279.704px;letter-spacing:-0.17px;left:5px;width:300px;text-align:center;color:#e4e5e6;">TC_1080i50</div>
<div class="a" style="left:210px;top:206px;width:80px;height:59px;background:#d0d3db;"></div>
<div class="a" style="left:210px;top:213.3px;width:80px;height:44.7px;background:#0080ff;"></div>
<svg style="left:274px;top:261px;" width="16" height="15" viewBox="0 0 16 15"><path d="M0 0.8 Q8 2.2 16 0 V15 H0Z" fill="url(#sb)"/></svg>
<div class="t" style="left:274.2px;top:261.6px;width:16px;text-align:center;font-weight:bold;font-size:15px;line-height:15px;height:15px;color:#fff;">S</div>
<div class="t" style="top:279.704px;letter-spacing:-0.03px;left:100px;width:300px;text-align:center;color:#e4e5e6;">TC_720p60m</div>
<div class="bub" style="left:312px;top:345px;">3</div>
<svg style="left:113px;top:990px;" width="16" height="13" viewBox="0 0 16 13"><rect x="0.8" y="1" width="2.6" height="2.6" fill="#e2e2e2"/><rect x="5" y="1.75" width="10" height="1.1" fill="#e2e2e2"/><rect x="0.8" y="5" width="2.6" height="2.6" fill="#e2e2e2"/><rect x="5" y="5.75" width="10" height="1.1" fill="#e2e2e2"/><rect x="0.8" y="9" width="2.6" height="2.6" fill="#e2e2e2"/><rect x="5" y="9.75" width="10" height="1.1" fill="#e2e2e2"/></svg>
<div class="a" style="left:140.3px;top:993px;width:93.7px;height:7px;background:#1f2226;border-radius:3.5px;"></div>
<div class="a" style="left:140.3px;top:993px;width:52px;height:7px;background:#80bdff;border-radius:3.5px;"></div>
<div class="a" style="left:187px;top:990px;width:13px;height:13px;background:#80bdff;border-radius:6.5px;"></div>
<div class="a" style="left:239px;top:984.5px;width:325px;height:24px;background:#1f2226;"></div>
<div class="t" style="top:989.703px;letter-spacing:0.20px;left:244.7px;color:#85878a;">Filter...</div>
<div class="a" style="left:2px;top:1016px;width:562px;height:5px;background:#2e3136;"></div>
<div class="a" style="left:3px;top:1016px;width:554px;height:5px;background:#b6b2b2;border-radius:2.5px;"></div>
<div class="a" style="left:2px;top:1021px;width:563px;height:1px;background:#2a2d31;"></div>
<div class="a" style="left:567px;top:511px;width:1px;height:25px;background:#cfcfcf;"></div>
<div class="a" style="left:570px;top:25px;width:65px;height:26px;background:#1f2226;"></div>
<div class="t" style="top:30.5382px;letter-spacing:0.62px;font-size:13.5px;left:580.4px;">Import</div>
<div class="a" style="left:570px;top:51px;width:711px;height:1px;background:#2a2d31;"></div>
<div class="a" style="left:570px;top:51px;width:1px;height:570px;background:#2a2d31;"></div>
<div class="a" style="left:570px;top:620px;width:711px;height:1px;background:#2a2d31;"></div>
<div class="a" style="left:580px;top:62px;width:112px;height:25px;background:#595d61;border-radius:4px;"></div>
<div class="t" style="top:67.373px;letter-spacing:-0.01px;font-size:14px;left:585.8px;">Archives</div>
<div class="a" style="left:663.5px;top:67px;width:1px;height:15px;background:#3a3d41;"></div>
<div class="a" style="left:694px;top:62px;width:543.5px;height:25px;background:#1f2226;"></div>
<svg style="left:694px;top:62px;" width="30" height="25" viewBox="0 0 30 25"><circle cx="10.4" cy="12.2" r="5.4" fill="none" stroke="#7cbcff" stroke-width="1.8"/><path d="M14.6093 16.3342 L21.6 23.2" stroke="#7cbcff" stroke-width="2.8" stroke-linecap="round"/></svg>
<div class="t" style="top:68.373px;letter-spacing:-0.15px;font-size:14px;left:719.4px;">C:/Users/fbr.VIZRTINT/Creative Cloud Files</div>
<div class="a" style="left:1243.7px;top:62px;width:27px;height:25px;background:#595d61;border-radius:4px;"></div>
<svg style="left:1243.7px;top:62px;" width="27" height="25" viewBox="0 0 27 25"><path d="M6.6 12.4 A7 7 0 0 1 19.2 8.6" fill="none" stroke="#e6e6e6" stroke-width="1.9"/><path d="M16.4 9.6 L21.6 5.2 L21.8 11.6Z" fill="#e6e6e6"/><path d="M20.6 12.8 A7 7 0 0 1 8 16.6" fill="none" stroke="#e6e6e6" stroke-width="1.9"/><path d="M10.8 15.6 L5.6 20 L5.4 13.6Z" fill="#e6e6e6"/></svg>
<div class="a" style="left:580px;top:93px;width:277px;height:518px;background:#1f2226;"></div>
<div class="a c" style="left:580px;top:93px;width:270px;height:511px;">
<svg style="left:4.8px;top:6.8px;" width="10.4" height="6.6" viewBox="0 0 10.4 6.6"><path d="M0 0 H10.4 L5.2 6.6Z" fill="#d8d8d8"/></svg>
<svg style="left:0px;top:0px;" width="270" height="10" viewBox="0 0 270 10"><g transform="translate(22.8,6)"><rect x="0.6" y="0" width="2" height="5.6" fill="#10a8f0"/><rect x="3.6" y="0" width="2.6" height="5.6" fill="#10a8f0"/><path d="M0.4 8.2 L9 4.2 L16.2 6.6 L7.4 11Z" fill="#f2f2f2"/><path d="M0.4 8.2 L7.4 11 V13 L0.4 10.2Z" fill="#c8c8c8"/><path d="M7.4 11 L16.2 6.6 V8.6 L7.4 13Z" fill="#dedede"/><rect x="4.6" y="10.6" width="1.6" height="0.9" fill="#2aa84a" transform="rotate(22 5 11)"/></g></svg>
<div class="t" style="top:2.7035px;letter-spacing:-0.14px;left:46.4px;color:#e4e5e6;">Local Disk (C:)</div>
<svg style="left:22.8px;top:24.8px;" width="10.4" height="6.6" viewBox="0 0 10.4 6.6"><path d="M0 0 H10.4 L5.2 6.6Z" fill="#d8d8d8"/></svg>
<svg style="left:0px;top:0px;" width="270" height="10" viewBox="0 0 270 10"><g transform="translate(42.6,21.2)"><path d="M2.6 0.2 H9 V10.6 L10.4 11 V13 H3.2Z" fill="url(#ff)"/><path d="M0 0.6 L3.4 0 L3.4 13.4 L2.9 15 L0.2 13.2Z" fill="#f6d670"/><path d="M3.4 0 L3.4 13.4" stroke="#e9bf55" stroke-width="0.5"/></g></svg>
<div class="t" style="top:20.7035px;letter-spacing:0.10px;left:64.4px;color:#e4e5e6;">Users</div>
<svg style="left:40.8px;top:42.8px;" width="10.4" height="6.6" viewBox="0 0 10.4 6.6"><path d="M0 0 H10.4 L5.2 6.6Z" fill="#d8d8d8"/></svg>
<svg style="left:0px;top:0px;" width="270" height="10" viewBox="0 0 270 10"><g transform="translate(60.6,39.2)"><path d="M2.6 0.2 H9 V10.6 L10.4 11 V13 H3.2Z" fill="url(#ff)"/><path d="M0 0.6 L3.4 0 L3.4 13.4 L2.9 15 L0.2 13.2Z" fill="#f6d670"/><path d="M3.4 0 L3.4 13.4" stroke="#e9bf55" stroke-width="0.5"/></g><g transform="translate(58.8,38.6)"><path d="M5.6 15.2 Q5.4 10 9.6 9.6 Q14 10 13.8 15.2Z" fill="#4a9a72"/><circle cx="9.4" cy="7.2" r="2.7" fill="#d8a880"/><path d="M6.6 6.6 Q7 3.6 9.8 3.8 Q12.4 4 12.2 6.6 Q10 5 6.6 6.6Z" fill="#3a2e28"/></g></svg>
<div class="t" style="top:38.7035px;letter-spacing:0.84px;left:82.4px;color:#e4e5e6;">fbr</div>
<div class="a" style="left:73px;top:55px;width:195px;height:18px;background:#80bdff;"></div>
<svg style="left:60.8px;top:59px;" width="6.4" height="10" viewBox="0 0 6.4 10"><path d="M0 0 L6.4 5 L0 10Z" fill="#d8d8d8"/></svg>
<svg style="left:0px;top:0px;" width="270" height="10" viewBox="0 0 270 10"><g transform="translate(77,56.6)"><path d="M4.6 0.8 H10.4 V7 H14.6 L7.5 15 L0.4 7 H4.6Z" fill="#3a98e4"/><path d="M4.6 0.8 H10.4 V3 H4.6Z" fill="#4aa6ee"/></g></svg>
<div class="t" style="top:56.7035px;letter-spacing:0.40px;left:100.6px;color:#2a2a2a;">Downloads</div>
<svg style="left:0px;top:0px;" width="270" height="10" viewBox="0 0 270 10"><g transform="translate(77,74.6)"><path d="M7.6 0.2 L15.6 2.6 V12 L7.6 15.6 L-0.2 12.4 V2.8Z" fill="#22a8d2"/><path d="M-0.2 2.8 L7.6 0.2 V11.6 L-0.2 12.4Z" fill="#c8f0f4"/><path d="M7.6 0.2 L15.6 2.6 V12 L7.6 11.6Z" fill="#2cb4dc"/><path d="M-0.2 12.4 L7.6 11.6 L15.6 12 L7.6 15.6Z" fill="#0e7ea8"/><path d="M-0.2 2.8 L3 1.7 V12.1 L-0.2 12.4Z" fill="#e4f8fa"/></g></svg>
<div class="t" style="top:74.7035px;letter-spacing:0.16px;left:100.6px;color:#e4e5e6;">3D Objects</div>
<svg style="left:60.8px;top:95px;" width="6.4" height="10" viewBox="0 0 6.4 10"><path d="M0 0 L6.4 5 L0 10Z" fill="#d8d8d8"/></svg>
<svg style="left:0px;top:0px;" width="270" height="10" viewBox="0 0 270 10"><g transform="translate(78.8,93.2)"><path d="M2.6 0.2 H9 V10.6 L10.4 11 V13 H3.2Z" fill="url(#ff)"/><path d="M0 0.6 L3.4 0 L3.4 13.4 L2.9 15 L0.2 13.2Z" fill="#f6d670"/><path d="M3.4 0 L3.4 13.4" stroke="#e9bf55" stroke-width="0.5"/></g></svg>
<div class="t" style="top:92.7035px;letter-spacing:0.38px;left:100.6px;color:#e4e5e6;">android-sdks</div>
<svg style="left:0px;top:0px;" width="270" height="10" viewBox="0 0 270 10"><g transform="translate(78.8,111.2)"><path d="M2.6 0.2 H9 V10.6 L10.4 11 V13 H3.2Z" fill="url(#ff)"/><path d="M0 0.6 L3.4 0 L3.4 13.4 L2.9 15 L0.2 13.2Z" fill="#f6d670"/><path d="M3.4 0 L3.4 13.4" stroke="#e9bf55" stroke-width="0.5"/></g><g transform="translate(77,110.6)"><rect x="6.8" y="9.6" width="9" height="5.4" fill="#dce8f6" stroke="#6a9ad0" stroke-width="0.6"/><circle cx="9.6" cy="11.6" r="1" fill="#c08860"/><rect x="8.6" y="12.6" width="2" height="1.6" fill="#4a8a5a"/><rect x="12" y="11.6" width="2.6" height="0.7" fill="#5a8ac8"/></g></svg>
<div class="t" style="top:110.704px;letter-spacing:0.19px;left:100.6px;color:#e4e5e6;">Contacts</div>
<svg style="left:60.8px;top:131px;" width="6.4" height="10" viewBox="0 0 6.4 10"><path d="M0 0 L6.4 5 L0 10Z" fill="#d8d8d8"/></svg>
<svg style="left:0px;top:0px;" width="270" height="10" viewBox="0 0 270 10"><g transform="translate(78.8,129.2)"><path d="M2.6 0.2 H9 V10.6 L10.4 11 V13 H3.2Z" fill="url(#ff)"/><path d="M0 0.6 L3.4 0 L3.4 13.4 L2.9 15 L0.2 13.2Z" fill="#f6d670"/><path d="M3.4 0 L3.4 13.4" stroke="#e9bf55" stroke-width="0.5"/></g><g transform="translate(77,128.6)"><circle cx="11.4" cy="10.6" r="4" fill="none" stroke="#e01818" stroke-width="1" stroke-dasharray="2 0.8"/><path d="M6 9 L11 12.4 M6 12.4 L11 9 M8.4 8.2 V13.4" stroke="#e82020" stroke-width="0.9"/></g></svg>
<div class="t" style="top:128.703px;letter-spacing:0.08px;left:100.6px;color:#e4e5e6;">Creative Cloud Files</div>
<svg style="left:60.8px;top:149px;" width="6.4" height="10" viewBox="0 0 6.4 10"><path d="M0 0 L6.4 5 L0 10Z" fill="#d8d8d8"/></svg>
<svg style="left:0px;top:0px;" width="270" height="10" viewBox="0 0 270 10"><g transform="translate(78.8,147.2)"><path d="M2.6 0.2 H9 V10.6 L10.4 11 V13 H3.2Z" fill="url(#ff)"/><path d="M0 0.6 L3.4 0 L3.4 13.4 L2.9 15 L0.2 13.2Z" fill="#f6d670"/><path d="M3.4 0 L3.4 13.4" stroke="#e9bf55" stroke-width="0.5"/></g><g transform="translate(77,146.6)"><path d="M9.8 0.4 L15.4 6" stroke="#2a8ae0" stroke-width="1.6"/><path d="M8.8 0.2 L12.4 0 L10.8 3.6Z" fill="#3a9af0"/><path d="M9 2.6 L12.6 -0.4" stroke="#58b0ff" stroke-width="0.8"/></g></svg>
<div class="t" style="top:146.703px;letter-spacing:0.43px;left:100.6px;color:#e4e5e6;">Documents</div>
<svg style="left:60.8px;top:167px;" width="6.4" height="10" viewBox="0 0 6.4 10"><path d="M0 0 L6.4 5 L0 10Z" fill="#d8d8d8"/></svg>
<svg style="left:0px;top:0px;" width="270" height="10" viewBox="0 0 270 10"><g transform="translate(78.8,165.2)"><path d="M2.6 0.2 H9 V10.6 L10.4 11 V13 H3.2Z" fill="url(#ff)"/><path d="M0 0.6 L3.4 0 L3.4 13.4 L2.9 15 L0.2 13.2Z" fill="#f6d670"/><path d="M3.4 0 L3.4 13.4" stroke="#e9bf55" stroke-width="0.5"/></g></svg>
<div class="t" style="top:164.703px;letter-spacing:0.58px;left:100.6px;color:#e4e5e6;">Dropbox</div>
<svg style="left:60.8px;top:185px;" width="6.4" height="10" viewBox="0 0 6.4 10"><path d="M0 0 L6.4 5 L0 10Z" fill="#d8d8d8"/></svg>
<svg style="left:0px;top:0px;" width="270" height="10" viewBox="0 0 270 10"><g transform="translate(78.8,183.2)"><path d="M2.6 0.2 H9 V10.6 L10.4 11 V13 H3.2Z" fill="url(#ff)"/><path d="M0 0.6 L3.4 0 L3.4 13.4 L2.9 15 L0.2 13.2Z" fill="#f6d670"/><path d="M3.4 0 L3.4 13.4" stroke="#e9bf55" stroke-width="0.5"/></g></svg>
<div class="t" style="top:182.703px;letter-spacing:0.15px;left:100.6px;color:#e4e5e6;">eclipse</div>
<svg style="left:60.8px;top:203px;" width="6.4" height="10" viewBox="0 0 6.4 10"><path d="M0 0 L6.4 5 L0 10Z" fill="#d8d8d8"/></svg>
<svg style="left:0px;top:0px;" width="270" height="10" viewBox="0 0 270 10"><g transform="translate(78.8,201.2)"><path d="M2.6 0.2 H9 V10.6 L10.4 11 V13 H3.2Z" fill="url(#ff)"/><path d="M0 0.6 L3.4 0 L3.4 13.4 L2.9 15 L0.2 13.2Z" fill="#f6d670"/><path d="M3.4 0 L3.4 13.4" stroke="#e9bf55" stroke-width="0.5"/></g></svg>
<div class="t" style="top:200.703px;letter-spacing:0.22px;left:100.6px;color:#e4e5e6;">eclipse-workspace</div>
<svg style="left:60.8px;top:221px;" width="6.4" height="10" viewBox="0 0 6.4 10"><path d="M0 0 L6.4 5 L0 10Z" fill="#d8d8d8"/></svg>
<svg style="left:0px;top:0px;" width="270" height="10" viewBox="0 0 270 10"><g transform="translate(78.8,219.2)"><path d="M2.6 0.2 H9 V10.6 L10.4 11 V13 H3.2Z" fill="url(#ff)"/><path d="M0 0.6 L3.4 0 L3.4 13.4 L2.9 15 L0.2 13.2Z" fill="#f6d670"/><path d="M3.4 0 L3.4 13.4" stroke="#e9bf55" stroke-width="0.5"/></g><g transform="translate(77,218.6)"><polygon stroke="#e89820" stroke-width="0.3" points="11,5.2 12.2343,8.50106 15.7553,8.65492 12.9972,10.8489 13.9389,14.2451 11,12.3 8.06107,14.2451 9.00278,10.8489 6.24472,8.65492 9.76565,8.50106" fill="#f4c030"/><path d="M10.6 4.6 L12.6 8.6 L10 7.6Z" fill="#e86a20" opacity="0.8"/><circle cx="9" cy="9" r="1.4" fill="#fff3c0" opacity="0.8"/></g></svg>
<div class="t" style="top:218.703px;letter-spacing:0.18px;left:100.6px;color:#e4e5e6;">Favorites</div>
<svg style="left:60.8px;top:239px;" width="6.4" height="10" viewBox="0 0 6.4 10"><path d="M0 0 L6.4 5 L0 10Z" fill="#d8d8d8"/></svg>
<svg style="left:0px;top:0px;" width="270" height="10" viewBox="0 0 270 10"><g transform="translate(78.8,237.2)"><path d="M2.6 0.2 H9 V10.6 L10.4 11 V13 H3.2Z" fill="url(#ff)"/><path d="M0 0.6 L3.4 0 L3.4 13.4 L2.9 15 L0.2 13.2Z" fill="#f6d670"/><path d="M3.4 0 L3.4 13.4" stroke="#e9bf55" stroke-width="0.5"/></g><g transform="translate(77,236.6)"><path d="M8.2 14 Q7.6 8.4 12.4 7.6" fill="none" stroke="#2a86e0" stroke-width="2"/><path d="M10.2 4.4 L15.6 4.6 L15.2 10Z" fill="#3a96f0"/></g></svg>
<div class="t" style="top:236.703px;letter-spacing:0.14px;left:100.6px;color:#e4e5e6;">Links</div>
<svg style="left:0px;top:0px;" width="270" height="10" viewBox="0 0 270 10"><g transform="translate(77,254.6)"><ellipse cx="5.4" cy="13" rx="3.2" ry="2.4" fill="#1e9af0" transform="rotate(-20 5.4 13)"/><path d="M7.8 12.6 V0.6" stroke="#1e9af0" stroke-width="1.5"/><path d="M7.8 0.6 Q9 5 12.4 6.8 Q13.6 9 12.2 11.6 Q12.6 8.2 7.8 5.6Z" fill="#1e9af0"/></g></svg>
<div class="t" style="top:254.703px;letter-spacing:0.29px;left:100.6px;color:#e4e5e6;">Music</div>
<svg style="left:0px;top:0px;" width="270" height="10" viewBox="0 0 270 10"><g transform="translate(77,272.6)"><path d="M2.2 0.2 H10.6 L13.8 3.4 V15.6 H2.2Z" fill="#f6f6f8"/><path d="M10.6 0.2 V3.4 H13.8Z" fill="#c6c8cc"/><path d="M2.2 14.6 H13.8 V15.6 H2.2Z" fill="#d4d6da"/></g></svg>
<div class="t" style="top:272.704px;letter-spacing:0.31px;left:100.6px;color:#e4e5e6;">OneDrive</div>
<svg style="left:60.8px;top:293px;" width="6.4" height="10" viewBox="0 0 6.4 10"><path d="M0 0 L6.4 5 L0 10Z" fill="#d8d8d8"/></svg>
<svg style="left:0px;top:0px;" width="270" height="10" viewBox="0 0 270 10"><g transform="translate(78.8,291.2)"><path d="M2.6 0.2 H9 V10.6 L10.4 11 V13 H3.2Z" fill="url(#ff)"/><path d="M0 0.6 L3.4 0 L3.4 13.4 L2.9 15 L0.2 13.2Z" fill="#f6d670"/><path d="M3.4 0 L3.4 13.4" stroke="#e9bf55" stroke-width="0.5"/></g><g transform="translate(77,290.6)"><path d="M6.6 14.8 Q5.4 14.6 5.6 12.8 Q6 11 8 11.2 Q9 8.6 11.6 9 Q13.6 9.4 14 11.4 Q16.2 11.6 16 13.4 Q15.8 14.8 14.4 14.8Z" fill="#1e8ae6"/><path d="M8 11.2 Q9 8.6 11.6 9 Q13.2 9.3 13.8 10.8 Q10 10 8 11.2Z" fill="#0a5cc0"/><path d="M6.6 14.8 Q10 12 16 13.4 Q15.8 14.8 14.4 14.8Z" fill="#38a8f4"/></g></svg>
<div class="t" style="top:290.704px;letter-spacing:0.24px;left:100.6px;color:#e4e5e6;">OneDrive - Vizrt Group</div>
<svg style="left:60.8px;top:311px;" width="6.4" height="10" viewBox="0 0 6.4 10"><path d="M0 0 L6.4 5 L0 10Z" fill="#d8d8d8"/></svg>
<svg style="left:0px;top:0px;" width="270" height="10" viewBox="0 0 270 10"><g transform="translate(78.8,309.2)"><path d="M2.6 0.2 H9 V10.6 L10.4 11 V13 H3.2Z" fill="url(#ff)"/><path d="M0 0.6 L3.4 0 L3.4 13.4 L2.9 15 L0.2 13.2Z" fill="#f6d670"/><path d="M3.4 0 L3.4 13.4" stroke="#e9bf55" stroke-width="0.5"/></g><g transform="translate(77,308.6)"><path d="M6.6 14.8 Q5.4 14.6 5.6 12.8 Q6 11 8 11.2 Q9 8.6 11.6 9 Q13.6 9.4 14 11.4 Q16.2 11.6 16 13.4 Q15.8 14.8 14.4 14.8Z" fill="#1e8ae6"/><path d="M8 11.2 Q9 8.6 11.6 9 Q13.2 9.3 13.8 10.8 Q10 10 8 11.2Z" fill="#0a5cc0"/><path d="M6.6 14.8 Q10 12 16 13.4 Q15.8 14.8 14.4 14.8Z" fill="#38a8f4"/></g></svg>
<div class="t" style="top:308.704px;letter-spacing:0.16px;left:100.6px;color:#e4e5e6;">OneDrive - Vizrt Group (1)</div>
<svg style="left:60.8px;top:329px;" width="6.4" height="10" viewBox="0 0 6.4 10"><path d="M0 0 L6.4 5 L0 10Z" fill="#d8d8d8"/></svg>
<svg style="left:0px;top:0px;" width="270" height="10" viewBox="0 0 270 10"><g transform="translate(78.8,327.2)"><path d="M2.6 0.2 H9 V10.6 L10.4 11 V13 H3.2Z" fill="url(#ff)"/><path d="M0 0.6 L3.4 0 L3.4 13.4 L2.9 15 L0.2 13.2Z" fill="#f6d670"/><path d="M3.4 0 L3.4 13.4" stroke="#e9bf55" stroke-width="0.5"/></g></svg>
<div class="t" style="top:326.704px;letter-spacing:0.34px;left:100.6px;color:#e4e5e6;">runtime-EclipseApplication</div>
<svg style="left:0px;top:0px;" width="270" height="10" viewBox="0 0 270 10"><g transform="translate(78.8,345.2)"><path d="M2.6 0.2 H9 V10.6 L10.4 11 V13 H3.2Z" fill="url(#ff)"/><path d="M0 0.6 L3.4 0 L3.4 13.4 L2.9 15 L0.2 13.2Z" fill="#f6d670"/><path d="M3.4 0 L3.4 13.4" stroke="#e9bf55" stroke-width="0.5"/></g><g transform="translate(77,344.6)"><rect x="5.6" y="6.4" width="3" height="7" fill="#3a86d8"/><circle cx="11.8" cy="9" r="3.4" fill="#3a3c40"/><path d="M7 14.6 H12.6 L11.4 12.6 Q10.8 9 11.4 7.4 Q11 4.6 9.8 4.4 Q8.4 4.6 8.4 7.4 Q9 9 8.2 12.6Z" fill="#e4e6ea"/></g></svg>
<div class="t" style="top:344.704px;letter-spacing:-0.04px;left:100.6px;color:#e4e5e6;">Saved Games</div>
<svg style="left:0px;top:0px;" width="270" height="10" viewBox="0 0 270 10"><g transform="translate(78.8,363.2)"><path d="M2.6 0.2 H9 V10.6 L10.4 11 V13 H3.2Z" fill="url(#ff)"/><path d="M0 0.6 L3.4 0 L3.4 13.4 L2.9 15 L0.2 13.2Z" fill="#f6d670"/><path d="M3.4 0 L3.4 13.4" stroke="#e9bf55" stroke-width="0.5"/></g><g transform="translate(77,362.6)"><circle cx="12.2" cy="6.4" r="3.6" fill="#8fb4d4" stroke="#5a7a9a" stroke-width="0.8"/><circle cx="11.4" cy="5.6" r="1.4" fill="#c4dcf0"/><path d="M9.4 9.2 L3.6 14.6" stroke="#8a96a6" stroke-width="1.3"/></g></svg>
<div class="t" style="top:362.704px;letter-spacing:-0.04px;left:100.6px;color:#e4e5e6;">Searches</div>
<svg style="left:60.8px;top:383px;" width="6.4" height="10" viewBox="0 0 6.4 10"><path d="M0 0 L6.4 5 L0 10Z" fill="#d8d8d8"/></svg>
<svg style="left:0px;top:0px;" width="270" height="10" viewBox="0 0 270 10"><g transform="translate(78.8,381.2)"><path d="M2.6 0.2 H9 V10.6 L10.4 11 V13 H3.2Z" fill="url(#ff)"/><path d="M0 0.6 L3.4 0 L3.4 13.4 L2.9 15 L0.2 13.2Z" fill="#f6d670"/><path d="M3.4 0 L3.4 13.4" stroke="#e9bf55" stroke-width="0.5"/></g></svg>
<div class="t" style="top:380.704px;letter-spacing:0.30px;left:100.6px;color:#e4e5e6;">source</div>
<svg style="left:60.8px;top:401px;" width="6.4" height="10" viewBox="0 0 6.4 10"><path d="M0 0 L6.4 5 L0 10Z" fill="#d8d8d8"/></svg>
<svg style="left:0px;top:0px;" width="270" height="10" viewBox="0 0 270 10"><g transform="translate(77,398.6)"><rect x="1.2" y="0.4" width="13.6" height="15.2" fill="#2a2c30" stroke="#55585c" stroke-width="0.5"/><rect x="3.6" y="1.4" width="8.8" height="6.2" fill="#2a6ae0"/><rect x="3.6" y="8.4" width="8.8" height="6.2" fill="#2a6ae0"/><circle cx="8" cy="3.6" r="1.8" fill="#e8c020"/><circle cx="6" cy="5" r="1.2" fill="#d83030"/><circle cx="10" cy="5" r="1.2" fill="#30a040"/><path d="M5.6 9 L8 12.4 L10.4 9Z" fill="#d84a2a"/><rect x="5" y="13.2" width="6" height="1.2" fill="#e8c020"/><rect x="1.8" y="1.4" width="1" height="1" fill="#8a8c90"/><rect x="13.2" y="1.4" width="1" height="1" fill="#8a8c90"/><rect x="1.8" y="3.8" width="1" height="1" fill="#8a8c90"/><rect x="13.2" y="3.8" width="1" height="1" fill="#8a8c90"/><rect x="1.8" y="6.2" width="1" height="1" fill="#8a8c90"/><rect x="13.2" y="6.2" width="1" height="1" fill="#8a8c90"/><rect x="1.8" y="8.6" width="1" height="1" fill="#8a8c90"/><rect x="13.2" y="8.6" width="1" height="1" fill="#8a8c90"/><rect x="1.8" y="11" width="1" height="1" fill="#8a8c90"/><rect x="13.2" y="11" width="1" height="1" fill="#8a8c90"/><rect x="1.8" y="13.4" width="1" height="1" fill="#8a8c90"/><rect x="13.2" y="13.4" width="1" height="1" fill="#8a8c90"/></g></svg>
<div class="t" style="top:398.704px;letter-spacing:0.14px;left:100.6px;color:#e4e5e6;">Videos</div>
<svg style="left:60.8px;top:419px;" width="6.4" height="10" viewBox="0 0 6.4 10"><path d="M0 0 L6.4 5 L0 10Z" fill="#d8d8d8"/></svg>
<svg style="left:0px;top:0px;" width="270" height="10" viewBox="0 0 270 10"><g transform="translate(78.8,417.2)"><path d="M2.6 0.2 H9 V10.6 L10.4 11 V13 H3.2Z" fill="url(#ff)"/><path d="M0 0.6 L3.4 0 L3.4 13.4 L2.9 15 L0.2 13.2Z" fill="#f6d670"/><path d="M3.4 0 L3.4 13.4" stroke="#e9bf55" stroke-width="0.5"/></g><g transform="translate(77,416.6)"><rect x="6.4" y="4.6" width="8.4" height="10.6" fill="#f4f6fa"/><rect x="6.4" y="4.6" width="3" height="10.6" fill="#2a7ae0"/><rect x="10.4" y="6" width="1.4" height="1.6" fill="#2a7ae0"/><rect x="10.4" y="8.8" width="1.4" height="1.6" fill="#2a7ae0"/><rect x="10.4" y="11.6" width="1.4" height="1.6" fill="#2a7ae0"/><rect x="12.6" y="6" width="1.4" height="1.6" fill="#2a7ae0"/><rect x="12.6" y="8.8" width="1.4" height="1.6" fill="#2a7ae0"/><rect x="12.6" y="11.6" width="1.4" height="1.6" fill="#2a7ae0"/><rect x="7.4" y="6" width="1" height="1.6" fill="#fff"/><rect x="7.4" y="9" width="1" height="1.6" fill="#fff"/></g></svg>
<div class="t" style="top:416.704px;letter-spacing:0.31px;left:100.6px;color:#e4e5e6;">Vizrt Group</div>
<svg style="left:60.8px;top:437px;" width="6.4" height="10" viewBox="0 0 6.4 10"><path d="M0 0 L6.4 5 L0 10Z" fill="#d8d8d8"/></svg>
<svg style="left:0px;top:0px;" width="270" height="10" viewBox="0 0 270 10"><g transform="translate(78.8,435.2)"><path d="M2.6 0.2 H9 V10.6 L10.4 11 V13 H3.2Z" fill="url(#ff)"/><path d="M0 0.6 L3.4 0 L3.4 13.4 L2.9 15 L0.2 13.2Z" fill="#f6d670"/><path d="M3.4 0 L3.4 13.4" stroke="#e9bf55" stroke-width="0.5"/></g></svg>
<div class="t" style="top:434.704px;letter-spacing:0.08px;left:100.6px;color:#e4e5e6;">Vizrt.QA</div>
<svg style="left:43px;top:455px;" width="6.4" height="10" viewBox="0 0 6.4 10"><path d="M0 0 L6.4 5 L0 10Z" fill="#d8d8d8"/></svg>
<svg style="left:0px;top:0px;" width="270" height="10" viewBox="0 0 270 10"><g transform="translate(60.6,453.2)"><path d="M2.6 0.2 H9 V10.6 L10.4 11 V13 H3.2Z" fill="url(#ff)"/><path d="M0 0.6 L3.4 0 L3.4 13.4 L2.9 15 L0.2 13.2Z" fill="#f6d670"/><path d="M3.4 0 L3.4 13.4" stroke="#e9bf55" stroke-width="0.5"/></g></svg>
<div class="t" style="top:452.704px;letter-spacing:0.25px;left:82.4px;color:#e4e5e6;">aau</div>
<svg style="left:43px;top:473px;" width="6.4" height="10" viewBox="0 0 6.4 10"><path d="M0 0 L6.4 5 L0 10Z" fill="#d8d8d8"/></svg>
<svg style="left:0px;top:0px;" width="270" height="10" viewBox="0 0 270 10"><g transform="translate(60.6,471.2)"><path d="M2.6 0.2 H9 V10.6 L10.4 11 V13 H3.2Z" fill="url(#ff)"/><path d="M0 0.6 L3.4 0 L3.4 13.4 L2.9 15 L0.2 13.2Z" fill="#f6d670"/><path d="M3.4 0 L3.4 13.4" stroke="#e9bf55" stroke-width="0.5"/></g></svg>
<div class="t" style="top:470.704px;letter-spacing:0.54px;left:82.4px;color:#e4e5e6;">Admin</div>
<svg style="left:43px;top:491px;" width="6.4" height="10" viewBox="0 0 6.4 10"><path d="M0 0 L6.4 5 L0 10Z" fill="#d8d8d8"/></svg>
<svg style="left:0px;top:0px;" width="270" height="10" viewBox="0 0 270 10"><g transform="translate(60.6,489.2)"><path d="M2.6 0.2 H9 V10.6 L10.4 11 V13 H3.2Z" fill="url(#ff)"/><path d="M0 0.6 L3.4 0 L3.4 13.4 L2.9 15 L0.2 13.2Z" fill="#f6d670"/><path d="M3.4 0 L3.4 13.4" stroke="#e9bf55" stroke-width="0.5"/></g></svg>
<div class="t" style="top:488.704px;letter-spacing:0.19px;left:82.4px;color:#e4e5e6;">Public</div>
<svg style="left:43px;top:509px;" width="6.4" height="10" viewBox="0 0 6.4 10"><path d="M0 0 L6.4 5 L0 10Z" fill="#d8d8d8"/></svg>
<svg style="left:0px;top:0px;" width="270" height="10" viewBox="0 0 270 10"><g transform="translate(60.6,507.2)"><path d="M2.6 0.2 H9 V10.6 L10.4 11 V13 H3.2Z" fill="url(#ff)"/><path d="M0 0.6 L3.4 0 L3.4 13.4 L2.9 15 L0.2 13.2Z" fill="#f6d670"/><path d="M3.4 0 L3.4 13.4" stroke="#e9bf55" stroke-width="0.5"/></g></svg>
<div class="t" style="top:506.704px;letter-spacing:0.69px;left:82.4px;color:#e4e5e6;">Temp</div>
</div>
<div class="a" style="left:849.5px;top:93px;width:7.5px;height:511px;background:#2e3136;"></div>
<div class="a" style="left:850.5px;top:94px;width:5px;height:292px;background:#b6b2b2;border-radius:2.5px;"></div>
<div class="a" style="left:580px;top:604px;width:277px;height:7px;background:#2e3136;"></div>
<div class="a" style="left:581px;top:605px;width:122px;height:5px;background:#b6b2b2;border-radius:2.5px;"></div>
<div class="a" style="left:849.5px;top:604px;width:1px;height:7px;background:#1f2226;"></div>
<div class="a" style="left:858px;top:338px;width:1px;height:25px;background:#cfcfcf;"></div>
<div class="a" style="left:860.5px;top:93.5px;width:411.5px;height:517px;background:#1f2226;"></div>
<div class="a" style="left:860.5px;top:93.5px;width:404.5px;height:21.5px;background:#35383d;"></div>
<div class="a" style="left:860.5px;top:93.5px;width:404.5px;height:1px;background:#2a2d31;"></div>
<div class="a" style="left:860.5px;top:114.5px;width:404.5px;height:1px;background:#2d3034;"></div>
<div class="a" style="left:1046px;top:94.5px;width:1px;height:20.5px;background:#26292d;"></div>
<div class="a" style="left:1146px;top:94.5px;width:1px;height:20.5px;background:#26292d;"></div>
<div class="a" style="left:1255px;top:94.5px;width:1px;height:20.5px;background:#26292d;"></div>
<div class="t" style="top:98.0035px;letter-spacing:0.40px;left:804px;width:300px;text-align:center;">Objectname</div>
<div class="t" style="top:98.0035px;letter-spacing:0.21px;left:947px;width:300px;text-align:center;">Filename</div>
<div class="t" style="top:98.0035px;letter-spacing:0.28px;left:1051.5px;width:300px;text-align:center;">Date</div>
<div class="a c" style="left:860.5px;top:115px;width:404.5px;height:494.5px;">
<svg style="left:6.4px;top:4.2px;" width="12.2" height="15.6" viewBox="0 0 12.2 15.6"><path d="M0 0 H8.4 L12.2 3.8 V15.6 H0Z" fill="#f5f5f7"/><path d="M8.4 0 V3.8 H12.2Z" fill="#c4c6ca"/><path d="M0 14.8 H12.2 V15.6 H0Z" fill="#d8dadd"/></svg>
<div class="t" style="top:4.7035px;letter-spacing:0.84px;left:27.8px;">111</div>
<div class="t" style="top:4.7035px;letter-spacing:0.41px;left:189.6px;">111.via</div>
<div class="t" style="top:4.7035px;letter-spacing:0.11px;left:290px;">17.08.2020 14:26</div>
<svg style="left:6.4px;top:26.2px;" width="12.2" height="15.6" viewBox="0 0 12.2 15.6"><path d="M0 0 H8.4 L12.2 3.8 V15.6 H0Z" fill="#f5f5f7"/><path d="M8.4 0 V3.8 H12.2Z" fill="#c4c6ca"/><path d="M0 14.8 H12.2 V15.6 H0Z" fill="#d8dadd"/></svg>
<div class="t" style="top:26.7035px;letter-spacing:0.20px;left:27.8px;">2020</div>
<div class="t" style="top:26.7035px;letter-spacing:0.14px;left:189.6px;">2020.via</div>
<div class="t" style="top:26.7035px;letter-spacing:0.17px;left:290px;">24.11.2020 08:05</div>
<svg style="left:6.4px;top:48.2px;" width="12.2" height="15.6" viewBox="0 0 12.2 15.6"><path d="M0 0 H8.4 L12.2 3.8 V15.6 H0Z" fill="#f5f5f7"/><path d="M8.4 0 V3.8 H12.2Z" fill="#c4c6ca"/><path d="M0 14.8 H12.2 V15.6 H0Z" fill="#d8dadd"/></svg>
<div class="t" style="top:48.7035px;letter-spacing:-0.11px;left:27.8px;">20201001_3-14-4_DXT5</div>
<div class="t" style="top:48.7035px;letter-spacing:-0.01px;left:189.6px;">20201001_3-...</div>
<div class="t" style="top:48.7035px;letter-spacing:0.11px;left:290px;">25.01.2021 08:59</div>
<svg style="left:6.4px;top:70.2px;" width="12.2" height="15.6" viewBox="0 0 12.2 15.6"><path d="M0 0 H8.4 L12.2 3.8 V15.6 H0Z" fill="#f5f5f7"/><path d="M8.4 0 V3.8 H12.2Z" fill="#c4c6ca"/><path d="M0 14.8 H12.2 V15.6 H0Z" fill="#d8dadd"/></svg>
<div class="t" style="top:70.7035px;letter-spacing:-0.41px;left:27.8px;">2COL_BDV (1)</div>
<div class="t" style="top:70.7035px;letter-spacing:-0.39px;left:189.6px;">2COL_BDV ...</div>
<div class="t" style="top:70.7035px;letter-spacing:0.11px;left:290px;">20.08.2020 10:44</div>
<svg style="left:6.4px;top:92.2px;" width="12.2" height="15.6" viewBox="0 0 12.2 15.6"><path d="M0 0 H8.4 L12.2 3.8 V15.6 H0Z" fill="#f5f5f7"/><path d="M8.4 0 V3.8 H12.2Z" fill="#c4c6ca"/><path d="M0 14.8 H12.2 V15.6 H0Z" fill="#d8dadd"/></svg>
<div class="t" style="top:92.7035px;letter-spacing:-0.41px;left:27.8px;">2COL_BDV (2)</div>
<div class="t" style="top:92.7035px;letter-spacing:-0.39px;left:189.6px;">2COL_BDV ...</div>
<div class="t" style="top:92.7035px;letter-spacing:0.11px;left:290px;">22.09.2020 08:17</div>
<svg style="left:6.4px;top:114.2px;" width="12.2" height="15.6" viewBox="0 0 12.2 15.6"><path d="M0 0 H8.4 L12.2 3.8 V15.6 H0Z" fill="#f5f5f7"/><path d="M8.4 0 V3.8 H12.2Z" fill="#c4c6ca"/><path d="M0 14.8 H12.2 V15.6 H0Z" fill="#d8dadd"/></svg>
<div class="t" style="top:114.704px;letter-spacing:-0.49px;left:27.8px;">2COL_BDV</div>
<div class="t" style="top:114.704px;letter-spacing:-0.20px;left:189.6px;">2COL_BDV.via</div>
<div class="t" style="top:114.704px;letter-spacing:0.11px;left:290px;">20.08.2020 10:44</div>
<svg style="left:6.4px;top:136.2px;" width="12.2" height="15.6" viewBox="0 0 12.2 15.6"><path d="M0 0 H8.4 L12.2 3.8 V15.6 H0Z" fill="#f5f5f7"/><path d="M8.4 0 V3.8 H12.2Z" fill="#c4c6ca"/><path d="M0 14.8 H12.2 V15.6 H0Z" fill="#d8dadd"/></svg>
<div class="t" style="top:136.703px;letter-spacing:-0.50px;left:27.8px;">2COL_BDV_WA</div>
<div class="t" style="top:136.703px;letter-spacing:-0.41px;left:189.6px;">2COL_BDV_W...</div>
<div class="t" style="top:136.703px;letter-spacing:0.11px;left:290px;">20.08.2020 10:43</div>
<svg style="left:6.4px;top:158.2px;" width="12.2" height="15.6" viewBox="0 0 12.2 15.6"><path d="M0 0 H8.4 L12.2 3.8 V15.6 H0Z" fill="#f5f5f7"/><path d="M8.4 0 V3.8 H12.2Z" fill="#c4c6ca"/><path d="M0 14.8 H12.2 V15.6 H0Z" fill="#d8dadd"/></svg>
<div class="t" style="top:158.703px;letter-spacing:0.14px;left:27.8px;">2DLabel</div>
<div class="t" style="top:158.703px;letter-spacing:0.12px;left:189.6px;">2DLabel.via</div>
<div class="t" style="top:158.703px;letter-spacing:0.17px;left:290px;">13.11.2020 09:56</div>
<svg style="left:6.4px;top:180.2px;" width="12.2" height="15.6" viewBox="0 0 12.2 15.6"><path d="M0 0 H8.4 L12.2 3.8 V15.6 H0Z" fill="#f5f5f7"/><path d="M8.4 0 V3.8 H12.2Z" fill="#c4c6ca"/><path d="M0 14.8 H12.2 V15.6 H0Z" fill="#d8dadd"/></svg>
<div class="t" style="top:180.703px;letter-spacing:-0.00px;left:27.8px;">3DRoads</div>
<div class="t" style="top:180.703px;letter-spacing:0.03px;left:189.6px;">3DRoads.via</div>
<div class="t" style="top:180.703px;letter-spacing:0.17px;left:290px;">13.11.2020 09:56</div>
<svg style="left:6.4px;top:202.2px;" width="12.2" height="15.6" viewBox="0 0 12.2 15.6"><path d="M0 0 H8.4 L12.2 3.8 V15.6 H0Z" fill="#f5f5f7"/><path d="M8.4 0 V3.8 H12.2Z" fill="#c4c6ca"/><path d="M0 14.8 H12.2 V15.6 H0Z" fill="#d8dadd"/></svg>
<div class="t" style="top:202.703px;letter-spacing:0.10px;left:27.8px;">4_Vizrt_RoadrunnerBug ...</div>
<div class="t" style="top:202.703px;letter-spacing:-0.01px;left:189.6px;">4_Vizrt_Roadr...</div>
<div class="t" style="top:202.703px;letter-spacing:0.11px;left:290px;">05.03.2021 13:31</div>
<svg style="left:6.4px;top:224.2px;" width="12.2" height="15.6" viewBox="0 0 12.2 15.6"><path d="M0 0 H8.4 L12.2 3.8 V15.6 H0Z" fill="#f5f5f7"/><path d="M8.4 0 V3.8 H12.2Z" fill="#c4c6ca"/><path d="M0 14.8 H12.2 V15.6 H0Z" fill="#d8dadd"/></svg>
<div class="t" style="top:224.703px;letter-spacing:0.16px;left:27.8px;">4_Vizrt_RoadrunnerBug</div>
<div class="t" style="top:224.703px;letter-spacing:-0.01px;left:189.6px;">4_Vizrt_Roadr...</div>
<div class="t" style="top:224.703px;letter-spacing:0.11px;left:290px;">07.12.2020 09:14</div>
<svg style="left:6.4px;top:246.2px;" width="12.2" height="15.6" viewBox="0 0 12.2 15.6"><path d="M0 0 H8.4 L12.2 3.8 V15.6 H0Z" fill="#f5f5f7"/><path d="M8.4 0 V3.8 H12.2Z" fill="#c4c6ca"/><path d="M0 14.8 H12.2 V15.6 H0Z" fill="#d8dadd"/></svg>
<div class="t" style="top:246.703px;letter-spacing:0.02px;left:27.8px;">5_MatchID (1)</div>
<div class="t" style="top:246.703px;letter-spacing:0.04px;left:189.6px;">5_MatchID ...</div>
<div class="t" style="top:246.703px;letter-spacing:0.11px;left:290px;">30.09.2020 13:17</div>
<svg style="left:6.4px;top:268.2px;" width="12.2" height="15.6" viewBox="0 0 12.2 15.6"><path d="M0 0 H8.4 L12.2 3.8 V15.6 H0Z" fill="#f5f5f7"/><path d="M8.4 0 V3.8 H12.2Z" fill="#c4c6ca"/><path d="M0 14.8 H12.2 V15.6 H0Z" fill="#d8dadd"/></svg>
<div class="t" style="top:268.704px;letter-spacing:0.13px;left:27.8px;">5_MatchID</div>
<div class="t" style="top:268.704px;letter-spacing:0.12px;left:189.6px;">5_MatchID.via</div>
<div class="t" style="top:268.704px;letter-spacing:0.11px;left:290px;">23.09.2020 12:59</div>
<svg style="left:6.4px;top:290.2px;" width="12.2" height="15.6" viewBox="0 0 12.2 15.6"><path d="M0 0 H8.4 L12.2 3.8 V15.6 H0Z" fill="#f5f5f7"/><path d="M8.4 0 V3.8 H12.2Z" fill="#c4c6ca"/><path d="M0 14.8 H12.2 V15.6 H0Z" fill="#d8dadd"/></svg>
<div class="t" style="top:290.704px;letter-spacing:0.28px;left:27.8px;">advanced_counter</div>
<div class="t" style="top:290.704px;letter-spacing:0.04px;left:189.6px;">advanced_co...</div>
<div class="t" style="top:290.704px;letter-spacing:0.11px;left:290px;">20.04.2021 08:03</div>
<svg style="left:6.4px;top:312.2px;" width="12.2" height="15.6" viewBox="0 0 12.2 15.6"><path d="M0 0 H8.4 L12.2 3.8 V15.6 H0Z" fill="#f5f5f7"/><path d="M8.4 0 V3.8 H12.2Z" fill="#c4c6ca"/><path d="M0 14.8 H12.2 V15.6 H0Z" fill="#d8dadd"/></svg>
<div class="t" style="top:312.704px;letter-spacing:-0.88px;left:27.8px;">AJE KEYPOINTS</div>
<div class="t" style="top:312.704px;letter-spacing:-0.80px;left:189.6px;">AJE ...</div>
<div class="t" style="top:312.704px;letter-spacing:0.17px;left:290px;">22.09.2020 11:15</div>
<svg style="left:6.4px;top:334.2px;" width="12.2" height="15.6" viewBox="0 0 12.2 15.6"><path d="M0 0 H8.4 L12.2 3.8 V15.6 H0Z" fill="#f5f5f7"/><path d="M8.4 0 V3.8 H12.2Z" fill="#c4c6ca"/><path d="M0 14.8 H12.2 V15.6 H0Z" fill="#d8dadd"/></svg>
<div class="t" style="top:334.704px;letter-spacing:0.17px;left:27.8px;">all_types_rudi</div>
<div class="t" style="top:334.704px;letter-spacing:0.12px;left:189.6px;">all_types_rudi...</div>
<div class="t" style="top:334.704px;letter-spacing:0.11px;left:290px;">15.04.2021 09:14</div>
<svg style="left:6.4px;top:356.2px;" width="12.2" height="15.6" viewBox="0 0 12.2 15.6"><path d="M0 0 H8.4 L12.2 3.8 V15.6 H0Z" fill="#f5f5f7"/><path d="M8.4 0 V3.8 H12.2Z" fill="#c4c6ca"/><path d="M0 14.8 H12.2 V15.6 H0Z" fill="#d8dadd"/></svg>
<div class="t" style="top:356.704px;letter-spacing:0.19px;left:27.8px;">AO_mapping</div>
<div class="t" style="top:356.704px;letter-spacing:0.10px;left:189.6px;">AO_mapping....</div>
<div class="t" style="top:356.704px;letter-spacing:0.11px;left:290px;">12.04.2021 15:28</div>
<svg style="left:6.4px;top:378.2px;" width="12.2" height="15.6" viewBox="0 0 12.2 15.6"><path d="M0 0 H8.4 L12.2 3.8 V15.6 H0Z" fill="#f5f5f7"/><path d="M8.4 0 V3.8 H12.2Z" fill="#c4c6ca"/><path d="M0 14.8 H12.2 V15.6 H0Z" fill="#d8dadd"/></svg>
<div class="t" style="top:378.704px;letter-spacing:0.08px;left:27.8px;">atlas google (1)</div>
<div class="t" style="top:378.704px;letter-spacing:0.10px;left:189.6px;">atlas google ...</div>
<div class="t" style="top:378.704px;letter-spacing:0.17px;left:290px;">19.11.2020 07:51</div>
<svg style="left:6.4px;top:400.2px;" width="12.2" height="15.6" viewBox="0 0 12.2 15.6"><path d="M0 0 H8.4 L12.2 3.8 V15.6 H0Z" fill="#f5f5f7"/><path d="M8.4 0 V3.8 H12.2Z" fill="#c4c6ca"/><path d="M0 14.8 H12.2 V15.6 H0Z" fill="#d8dadd"/></svg>
<div class="t" style="top:400.704px;letter-spacing:0.19px;left:27.8px;">atlas google</div>
<div class="t" style="top:400.704px;letter-spacing:0.17px;left:189.6px;">atlas google.via</div>
<div class="t" style="top:400.704px;letter-spacing:0.17px;left:290px;">19.11.2020 07:37</div>
<svg style="left:6.4px;top:422.2px;" width="12.2" height="15.6" viewBox="0 0 12.2 15.6"><path d="M0 0 H8.4 L12.2 3.8 V15.6 H0Z" fill="#f5f5f7"/><path d="M8.4 0 V3.8 H12.2Z" fill="#c4c6ca"/><path d="M0 14.8 H12.2 V15.6 H0Z" fill="#d8dadd"/></svg>
<div class="t" style="top:422.704px;letter-spacing:0.13px;left:27.8px;">bb_style_test</div>
<div class="t" style="top:422.704px;letter-spacing:0.06px;left:189.6px;">bb_style_test....</div>
<div class="t" style="top:422.704px;letter-spacing:0.11px;left:290px;">02.03.2021 09:36</div>
<svg style="left:6.4px;top:444.2px;" width="12.2" height="15.6" viewBox="0 0 12.2 15.6"><path d="M0 0 H8.4 L12.2 3.8 V15.6 H0Z" fill="#f5f5f7"/><path d="M8.4 0 V3.8 H12.2Z" fill="#c4c6ca"/><path d="M0 14.8 H12.2 V15.6 H0Z" fill="#d8dadd"/></svg>
<div class="t" style="top:444.704px;letter-spacing:0.15px;left:27.8px;">Browser_2020-10-15</div>
<div class="t" style="top:444.704px;letter-spacing:0.11px;left:189.6px;">Browser_202...</div>
<div class="t" style="top:444.704px;letter-spacing:0.11px;left:290px;">28.10.2020 08:56</div>
<svg style="left:6.4px;top:466.2px;" width="12.2" height="15.6" viewBox="0 0 12.2 15.6"><path d="M0 0 H8.4 L12.2 3.8 V15.6 H0Z" fill="#f5f5f7"/><path d="M8.4 0 V3.8 H12.2Z" fill="#c4c6ca"/><path d="M0 14.8 H12.2 V15.6 H0Z" fill="#d8dadd"/></svg>
<div class="t" style="top:466.704px;letter-spacing:-0.14px;left:27.8px;">case</div>
<div class="t" style="top:466.704px;letter-spacing:-0.03px;left:189.6px;">case.via</div>
<div class="t" style="top:466.704px;letter-spacing:0.11px;left:290px;">28.10.2020 10:55</div>
<svg style="left:6.4px;top:488.2px;" width="12.2" height="15.6" viewBox="0 0 12.2 15.6"><path d="M0 0 H8.4 L12.2 3.8 V15.6 H0Z" fill="#f5f5f7"/><path d="M8.4 0 V3.8 H12.2Z" fill="#c4c6ca"/><path d="M0 14.8 H12.2 V15.6 H0Z" fill="#d8dadd"/></svg>
<div class="t" style="top:488.704px;letter-spacing:-0.01px;left:27.8px;">Case0014402_DexterC</div>
<div class="t" style="top:488.704px;letter-spacing:-0.03px;left:189.6px;">Case0014440...</div>
<div class="t" style="top:488.704px;letter-spacing:0.17px;left:290px;">09.11.2020 08:41</div>
</div>
<div class="a" style="left:1265px;top:93.5px;width:7px;height:517px;background:#2e3136;"></div>
<div class="a" style="left:1266px;top:94px;width:5px;height:99px;background:#b6b2b2;border-radius:2.5px;"></div>
<div class="bub" style="left:892px;top:453px;">1</div>
<div class="bub" style="left:665px;top:61px;">2</div>
<div class="a" style="left:914px;top:623.5px;width:25px;height:1px;background:#cfcfcf;"></div>
<div class="a" style="left:570px;top:626px;width:67px;height:25px;background:#1f2226;"></div>
<div class="t" style="top:630.703px;letter-spacing:0.22px;left:580.4px;">Archive</div>
<div class="a" style="left:570px;top:651px;width:711px;height:1px;background:#2a2d31;"></div>
<div class="a" style="left:570px;top:651px;width:1px;height:371px;background:#2a2d31;"></div>
<div class="a" style="left:570px;top:1021px;width:711px;height:1px;background:#2a2d31;"></div>
<div class="a" style="left:580px;top:661px;width:172px;height:25px;background:#595d61;border-radius:4px;"></div>
<div class="t" style="top:666.703px;letter-spacing:0.21px;left:586px;">Entry Point View</div>
<div class="a" style="left:757px;top:661px;width:145px;height:25px;background:#595d61;border-radius:4px;"></div>
<div class="t" style="top:666.703px;letter-spacing:0.12px;left:763.2px;">All</div>
<div class="a" style="left:730.3px;top:666px;width:1px;height:15px;background:#3a3d41;"></div>
<div class="a" style="left:880.3px;top:666px;width:1px;height:15px;background:#3a3d41;"></div>
<svg style="left:738.4px;top:667.6px;" width="6" height="12" viewBox="0 0 6 12"><path d="M0 4 H5.6 L2.8 0Z M0 7.6 H5.6 L2.8 11.6Z" fill="#d4d4d4"/></svg>
<svg style="left:888.6px;top:667.6px;" width="6" height="12" viewBox="0 0 6 12"><path d="M0 4 H5.6 L2.8 0Z M0 7.6 H5.6 L2.8 11.6Z" fill="#d4d4d4"/></svg>
<div class="a" style="left:580px;top:692px;width:172px;height:213px;background:#1f2226;"></div>
<svg style="left:602.8px;top:695.5px" width="16.8" height="12.2" viewBox="0 0 19 13" preserveAspectRatio="none"><path d="M1.4 0.3 H16.6 V6 H1.4Z" fill="#e8a830"/><path d="M2 1.7 H14.3 L16.6 3.6 V6 H2Z" fill="#fff6d8"/><path d="M0.3 4.7 H18.7 L17.7 12.6 Q17.6 13 17 13 H2 Q1.4 13 1.3 12.6Z" fill="url(#fy)"/></svg>
<div class="t" style="top:694.703px;letter-spacing:0.25px;left:626px;">File Entrypoints</div>
<div class="a" style="left:757px;top:692px;width:514px;height:213px;background:#1f2226;"></div>
<div class="a" style="left:754px;top:771px;width:1px;height:25px;background:#cfcfcf;"></div>
<div class="bub" style="left:892px;top:790px;">4</div>
<div class="a" style="left:914px;top:907.5px;width:25px;height:1px;background:#cfcfcf;"></div>
<div class="t" style="top:911.703px;letter-spacing:0.53px;left:580.4px;">Comment</div>
<div class="a" style="left:580px;top:934px;width:691px;height:46px;background:#1f2226;"></div>
<div class="a" style="left:580px;top:986px;width:691px;height:26px;background:#595d61;border-radius:4px;"></div>
<div class="t" style="top:991.703px;letter-spacing:0.47px;left:775.5px;width:300px;text-align:center;">Import Archive</div>
</body></html>
